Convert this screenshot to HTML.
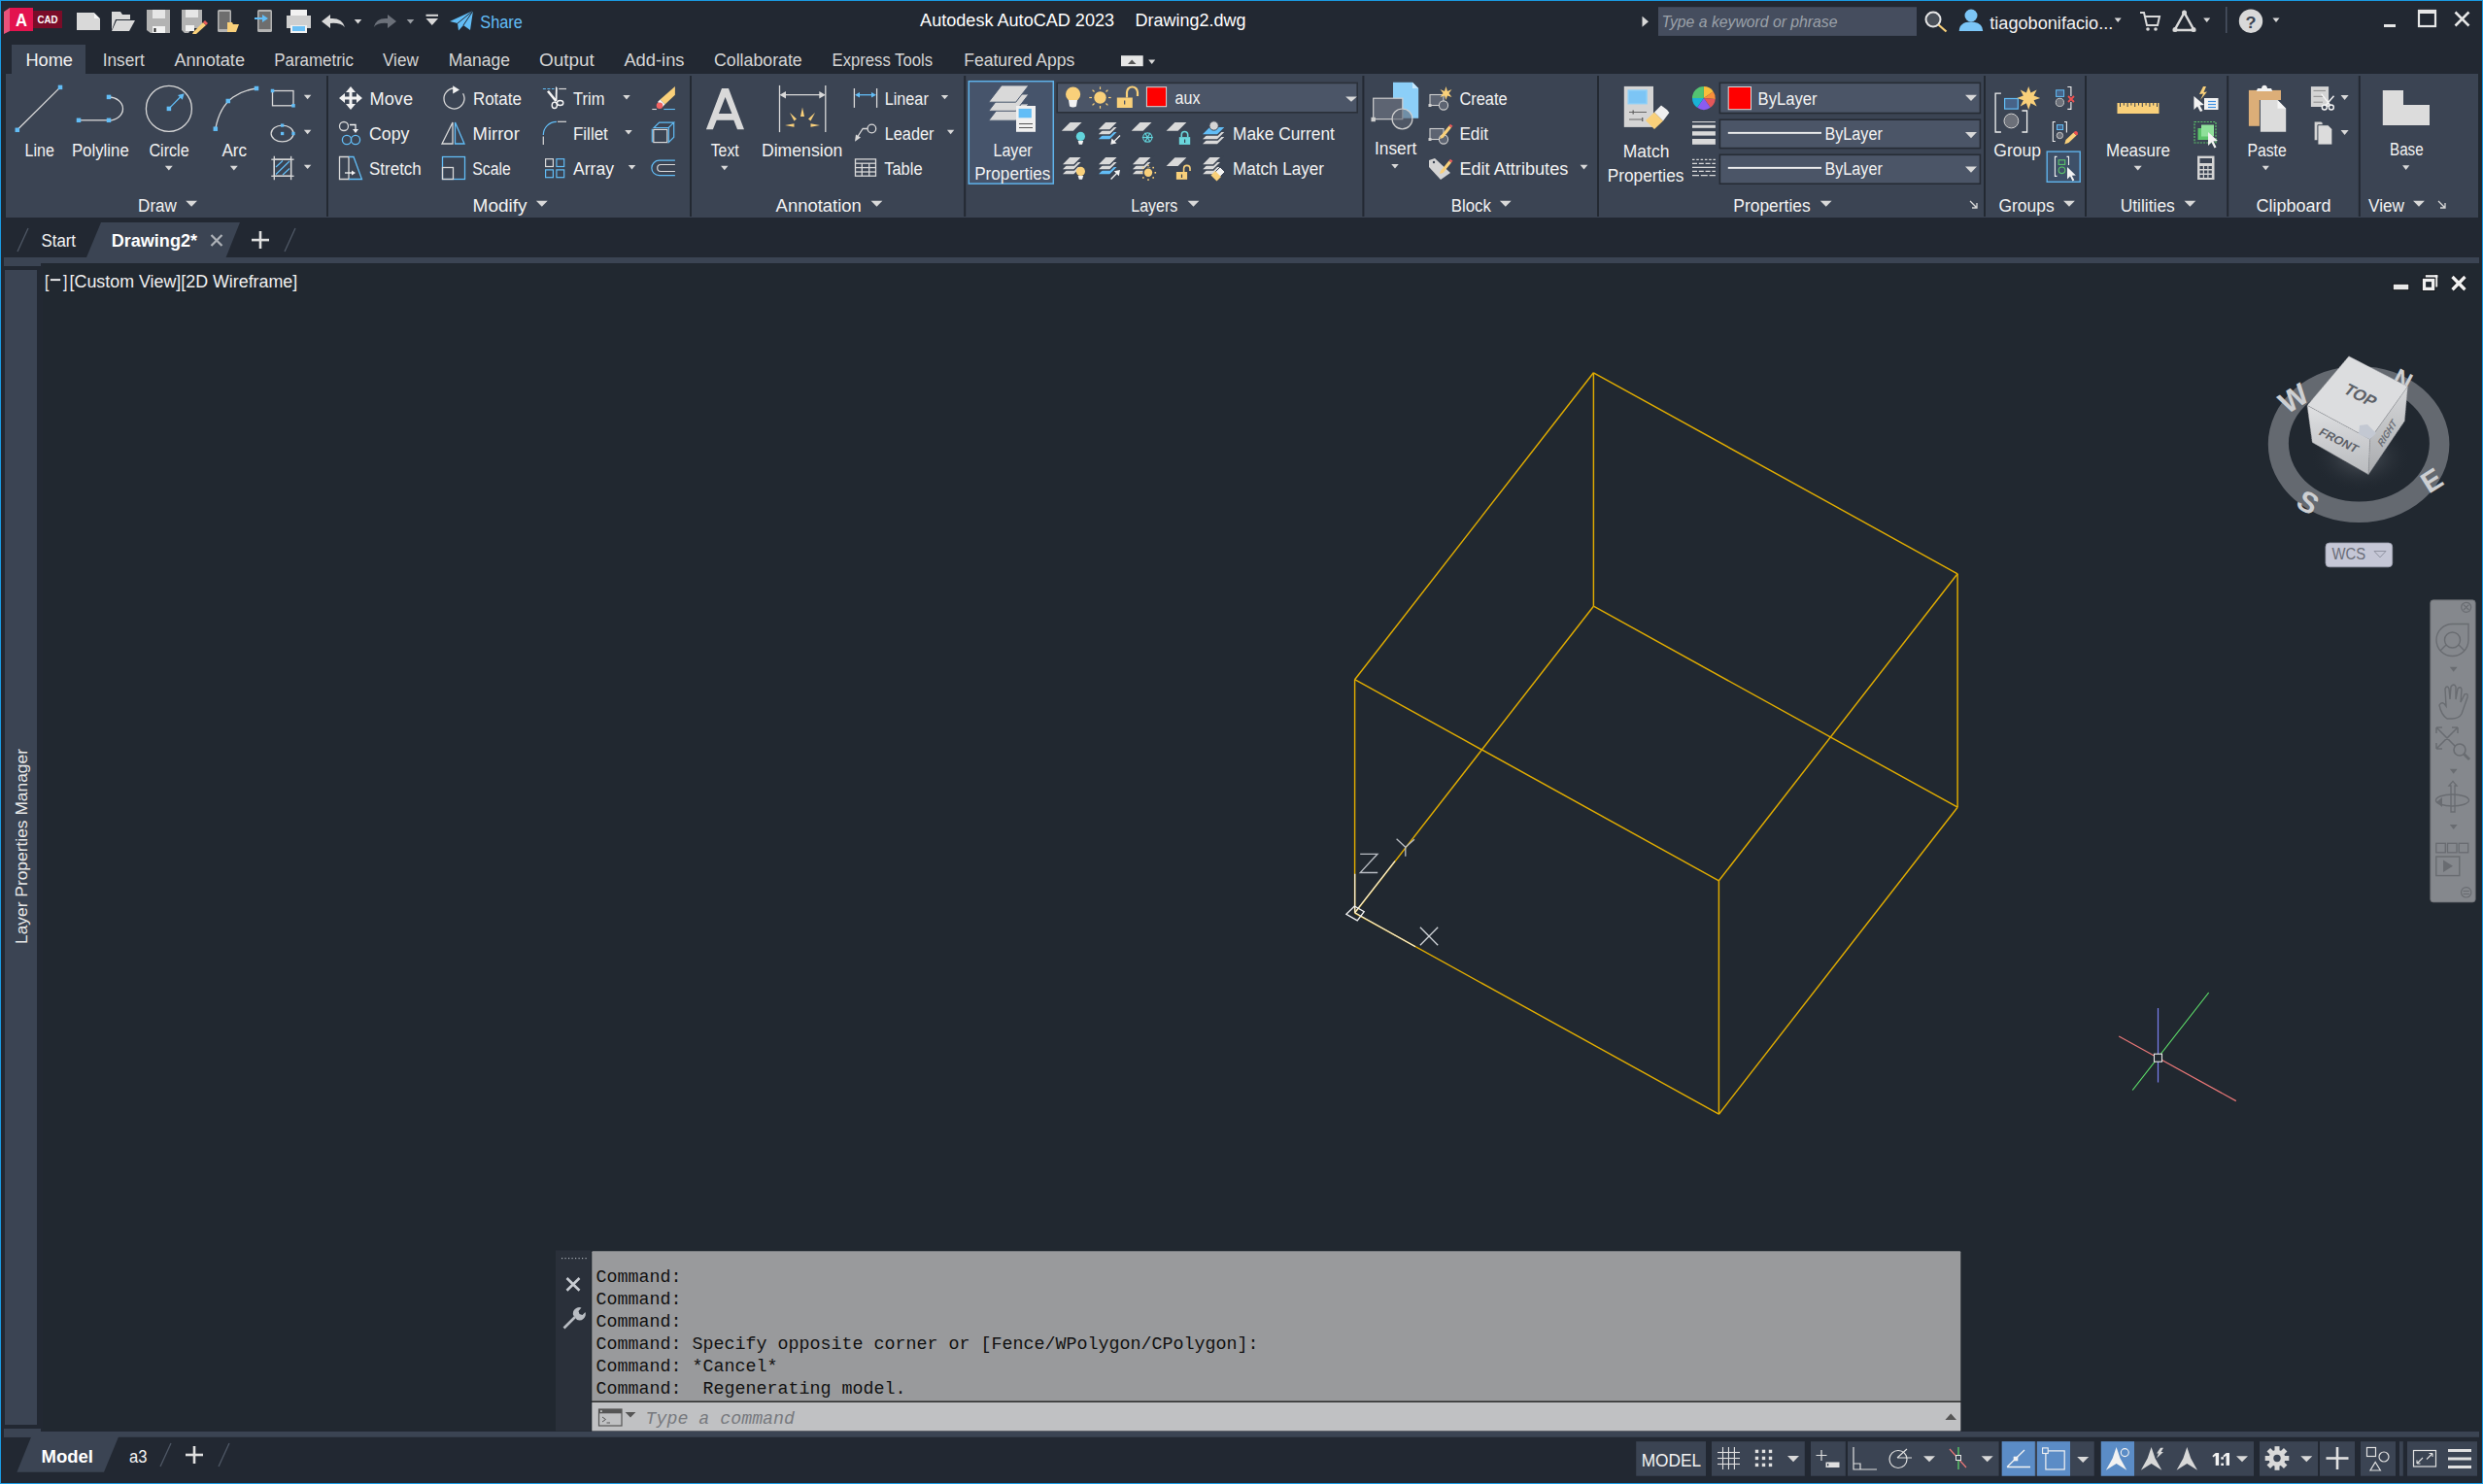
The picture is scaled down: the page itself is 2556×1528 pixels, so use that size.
<!DOCTYPE html>
<html><head><meta charset="utf-8"><title>AutoCAD</title>
<style>
html,body{margin:0;padding:0;width:2556px;height:1528px;overflow:hidden;background:#212830;}
body{font-family:"Liberation Sans",sans-serif;position:relative;}
.r{position:absolute;}
svg{position:absolute;left:0;top:0;}
</style></head><body>
<div class="r" style="left:0;top:0;width:2556px;height:76px;background:#222832"></div>
<div class="r" style="left:0;top:224px;width:2556px;height:47px;background:#222832"></div>
<div class="r" style="left:0;top:1473px;width:2556px;height:55px;background:#222832"></div>
<div class="r" style="left:0;top:271px;width:44px;height:1208px;background:#222832"></div>
<div class="r" style="left:0;top:0;width:2556px;height:1.2px;background:#1a9be3"></div>
<div class="r" style="left:0;top:0;width:1.4px;height:1528px;background:#1a9be3"></div>
<svg width="2556" height="1528" viewBox="0 0 2556 1528">
<path d="M4,12 L10,8 L10,32 L4,35 Z" fill="#e8527a" />
<rect x="10" y="8" width="24" height="24" fill="#e3134e" />
<rect x="34" y="11" width="30" height="18" fill="#7a0c28" />
<text x="16" y="27.2" font-family="Liberation Sans" font-size="19" fill="#fff" font-weight="bold" font-style="normal" textLength="12" lengthAdjust="spacingAndGlyphs" >A</text>
<text x="38.4" y="24.4" font-family="Liberation Sans" font-size="11.5" fill="#fff" font-weight="bold" font-style="normal" textLength="21" lengthAdjust="spacingAndGlyphs" >CAD</text>
<path d="M79,13 L97,13 L103,19 L103,31 L79,31 Z" fill="#d9d9d9" />
<path d="M97,13 L103,19 L97,19 Z" fill="#f5f5f5" />
<path d="M97,13 L103,13 L103,19 Z" fill="#222832" />
<path d="M115,12 L124,12 L126,15 L134,15 L134,20 L119,20 L115,31 Z" fill="#d9d9d9" />
<path d="M120,21 L139,21 L133,32 L115,32 Z" fill="#d9d9d9" />
<path d="M151,10 L175,10 L175,34 L155,34 L151,31 Z" fill="#b3b3b3" />
<rect x="157" y="10" width="13" height="9" fill="#e6e6e6" />
<rect x="157" y="27" width="13" height="7" fill="#f2f2f2" />
<rect x="158.5" y="29" width="2" height="4" fill="#222" />
<path d="M187,10 L208,10 L208,29 L198,29 L194,34 L190,34 L187,31 Z" fill="#b3b3b3" />
<rect x="191" y="10" width="13" height="8" fill="#e6e6e6" />
<rect x="191" y="26" width="9" height="6" fill="#f2f2f2" />
<path d="M199,33 L209,23 L212,26 L202,35 L198,35 Z" fill="#f9d07a" />
<path d="M209,23 L211,21 L214,24 L212,26 Z" fill="#e85a5a" />
<rect x="224" y="10" width="14" height="23" fill="#b3b3b3" rx="1.5"/>
<rect x="225.5" y="12" width="11" height="18" fill="#6e6e6e" />
<path d="M234,23 L239,23 L240,25 L246,25 L243,33 L234,33 Z" fill="#f9d07a" />
<rect x="265" y="10" width="15" height="23" fill="#b3b3b3" rx="1.5"/>
<rect x="266.5" y="12" width="12" height="18" fill="#6e6e6e" />
<path d="M262,18 L270,18 L270,15 L276,19 L270,23 L270,20 L262,20 Z" fill="#62bdf6" />
<rect x="299" y="10" width="17" height="7" fill="#f2f2f2" />
<path d="M295,16 L320,16 L320,29 L295,29 Z" fill="#cfcfcf" />
<rect x="299" y="26" width="17" height="8" fill="#f2f2f2" />
<rect x="301" y="27" width="13" height="5" fill="#6cc0f5" />
<path d="M331,22 L340,15 L340,19 Q352,18 355,28 Q350,23 340,24 L340,29 Z" fill="#d9d9d9" />
<path d="M364.75,20 L372.25,20 L368.5,24.5 Z" fill="#d9d9d9"/>
<path d="M408,22 L399,15 L399,19 Q387,18 384.8,28 Q389,23 399,24 L399,29 Z" fill="#6b7079" />
<path d="M418.75,20 L426.25,20 L422.5,24.5 Z" fill="#9a9ea4"/>
<rect x="438.5" y="14.8" width="12.5" height="2" fill="#d9d9d9" />
<path d="M438.5,19 L451,19 L444.75,26 Z" fill="#d9d9d9" />
<path d="M463,22 L487,11 L484,31 L477,26 L472,31.6 L471,24 Z" fill="#62bdf6" />
<path d="M471,24 L487,11 L477,26" fill="none" stroke="#222832" stroke-width="1" />
<text x="494.3" y="29" font-family="Liberation Sans" font-size="18" fill="#62bdf6" font-weight="normal" font-style="normal" textLength="43.5" lengthAdjust="spacingAndGlyphs" >Share</text>
<text x="947.1" y="27" font-family="Liberation Sans" font-size="18" fill="#ffffff" font-weight="normal" font-style="normal" textLength="200" lengthAdjust="spacingAndGlyphs" >Autodesk AutoCAD 2023</text>
<text x="1168.5" y="27" font-family="Liberation Sans" font-size="18" fill="#ffffff" font-weight="normal" font-style="normal" textLength="114" lengthAdjust="spacingAndGlyphs" >Drawing2.dwg</text>
<path d="M1690.5,16.8 L1697,22.3 L1690.5,27.8 Z" fill="#d9d9d9" />
<rect x="1707" y="7.2" width="266" height="29.7" fill="#454d5e" />
<text x="1710.5" y="28" font-family="Liberation Sans" font-size="17" fill="#9ba1a9" font-weight="normal" font-style="italic" textLength="181" lengthAdjust="spacingAndGlyphs" >Type a keyword or phrase</text>
<circle cx="1990" cy="20" r="7.5" fill="#4a5059" stroke="#e6e6e6" stroke-width="2"/>
<line x1="1995.5" y1="25.5" x2="2003.5" y2="32.5" stroke="#f9d07a" stroke-width="2.2" />
<circle cx="2029" cy="16" r="6.5" fill="#7cc6f7"/>
<path d="M2016.7,32 Q2017,22.5 2029,22.5 Q2041,22.5 2041.2,32 Z" fill="#7cc6f7" />
<text x="2048.3" y="30" font-family="Liberation Sans" font-size="18" fill="#f2f2f2" font-weight="normal" font-style="normal" textLength="127" lengthAdjust="spacingAndGlyphs" >tiagobonifacio...</text>
<path d="M2176.7,18.5 L2183.7,18.5 L2180.2,23.0 Z" fill="#d9d9d9"/>
<path d="M2203,13 L2207,13 L2210,26 L2221,26 L2223,17 L2208,17" fill="none" stroke="#d9d9d9" stroke-width="2" />
<circle cx="2211" cy="30" r="1.8" fill="#d9d9d9"/><circle cx="2219" cy="30" r="1.8" fill="#d9d9d9"/>
<path d="M2248.5,13 L2238.5,31 L2258.5,31 Z" fill="none" stroke="#d9d9d9" stroke-width="2.5" />
<circle cx="2248.5" cy="13" r="2.5" fill="#d9d9d9"/><circle cx="2239" cy="30.5" r="2.5" fill="#d9d9d9"/><circle cx="2258" cy="30.5" r="2.5" fill="#d9d9d9"/>
<path d="M2268.2,18.5 L2275.2,18.5 L2271.7,23.0 Z" fill="#d9d9d9"/>
<rect x="2291" y="7" width="1.5" height="27" fill="#4a5363" />
<circle cx="2317" cy="21.7" r="12.2" fill="#d9d9d9"/>
<text x="2311.5" y="28.5" font-family="Liberation Sans" font-size="17" fill="#3b4453" font-weight="bold" font-style="normal" textLength="11" lengthAdjust="spacingAndGlyphs" >?</text>
<path d="M2339.5,18.5 L2346.5,18.5 L2343,23.0 Z" fill="#d9d9d9"/>
<rect x="2454" y="25" width="12" height="3" fill="#e6e6e6" />
<rect x="2490" y="11" width="17" height="16" fill="none" stroke="#e6e6e6" stroke-width="2.2"/>
<rect x="2489" y="10" width="19" height="4" fill="#e6e6e6" />
<path d="M2527.5,12.5 L2541.5,26.5 M2541.5,12.5 L2527.5,26.5" fill="none" stroke="#e6e6e6" stroke-width="2.6" />
<rect x="12" y="46" width="76" height="30" fill="#3b4453" />
<text x="26.4" y="68" font-family="Liberation Sans" font-size="18" fill="#f2f2f2" font-weight="normal" font-style="normal" textLength="48.6" lengthAdjust="spacingAndGlyphs" >Home</text>
<text x="105.7" y="68" font-family="Liberation Sans" font-size="18" fill="#d6d6d6" font-weight="normal" font-style="normal" textLength="43.1" lengthAdjust="spacingAndGlyphs" >Insert</text>
<text x="179.4" y="68" font-family="Liberation Sans" font-size="18" fill="#d6d6d6" font-weight="normal" font-style="normal" textLength="72.6" lengthAdjust="spacingAndGlyphs" >Annotate</text>
<text x="282.2" y="68" font-family="Liberation Sans" font-size="18" fill="#d6d6d6" font-weight="normal" font-style="normal" textLength="81.8" lengthAdjust="spacingAndGlyphs" >Parametric</text>
<text x="394" y="68" font-family="Liberation Sans" font-size="18" fill="#d6d6d6" font-weight="normal" font-style="normal" textLength="36.8" lengthAdjust="spacingAndGlyphs" >View</text>
<text x="461.7" y="68" font-family="Liberation Sans" font-size="18" fill="#d6d6d6" font-weight="normal" font-style="normal" textLength="63.2" lengthAdjust="spacingAndGlyphs" >Manage</text>
<text x="555" y="68" font-family="Liberation Sans" font-size="18" fill="#d6d6d6" font-weight="normal" font-style="normal" textLength="56.9" lengthAdjust="spacingAndGlyphs" >Output</text>
<text x="642.4" y="68" font-family="Liberation Sans" font-size="18" fill="#d6d6d6" font-weight="normal" font-style="normal" textLength="62.1" lengthAdjust="spacingAndGlyphs" >Add-ins</text>
<text x="735" y="68" font-family="Liberation Sans" font-size="18" fill="#d6d6d6" font-weight="normal" font-style="normal" textLength="90.7" lengthAdjust="spacingAndGlyphs" >Collaborate</text>
<text x="856.6" y="68" font-family="Liberation Sans" font-size="18" fill="#d6d6d6" font-weight="normal" font-style="normal" textLength="103.4" lengthAdjust="spacingAndGlyphs" >Express Tools</text>
<text x="992.2" y="68" font-family="Liberation Sans" font-size="18" fill="#d6d6d6" font-weight="normal" font-style="normal" textLength="114.1" lengthAdjust="spacingAndGlyphs" >Featured Apps</text>
<rect x="1154" y="57.2" width="22.7" height="11" fill="#e6e6e6" />
<path d="M1161,66 L1169.5,66 L1165.2,61.5 Z" fill="#555" />
<path d="M1182.2,61.5 L1189.2,61.5 L1185.7,66.0 Z" fill="#d9d9d9"/>
<rect x="6" y="76" width="2545" height="148" fill="#3b4453" />
<rect x="336" y="78" width="2" height="145" fill="#232932" />
<rect x="710" y="78" width="2" height="145" fill="#232932" />
<rect x="992.2" y="78" width="2" height="145" fill="#232932" />
<rect x="1402.4" y="78" width="2" height="145" fill="#232932" />
<rect x="1644" y="78" width="2" height="145" fill="#232932" />
<rect x="2042" y="78" width="2" height="145" fill="#232932" />
<rect x="2146" y="78" width="2" height="145" fill="#232932" />
<rect x="2292.2" y="78" width="2" height="145" fill="#232932" />
<rect x="2427.8" y="78" width="2" height="145" fill="#232932" />
<text x="142.1" y="217.6" font-family="Liberation Sans" font-size="18" fill="#f2f2f2" font-weight="normal" font-style="normal" textLength="39.7" lengthAdjust="spacingAndGlyphs" >Draw</text>
<path d="M191.2,206.7 L203.0,206.7 L197.1,212.79999999999998 Z" fill="#d9d9d9"/>
<text x="486.6" y="217.6" font-family="Liberation Sans" font-size="18" fill="#f2f2f2" font-weight="normal" font-style="normal" textLength="55.9" lengthAdjust="spacingAndGlyphs" >Modify</text>
<path d="M551.9,206.7 L563.6999999999999,206.7 L557.8,212.79999999999998 Z" fill="#d9d9d9"/>
<text x="798.6" y="217.6" font-family="Liberation Sans" font-size="18" fill="#f2f2f2" font-weight="normal" font-style="normal" textLength="88.2" lengthAdjust="spacingAndGlyphs" >Annotation</text>
<path d="M896.6,206.7 L908.4,206.7 L902.5,212.79999999999998 Z" fill="#d9d9d9"/>
<text x="1164.3" y="217.6" font-family="Liberation Sans" font-size="18" fill="#f2f2f2" font-weight="normal" font-style="normal" textLength="48" lengthAdjust="spacingAndGlyphs" >Layers</text>
<path d="M1222.6,206.7 L1234.4,206.7 L1228.5,212.79999999999998 Z" fill="#d9d9d9"/>
<text x="1493.8" y="217.6" font-family="Liberation Sans" font-size="18" fill="#f2f2f2" font-weight="normal" font-style="normal" textLength="41.1" lengthAdjust="spacingAndGlyphs" >Block</text>
<path d="M1543.8999999999999,206.7 L1555.7,206.7 L1549.8,212.79999999999998 Z" fill="#d9d9d9"/>
<text x="1784.3" y="217.6" font-family="Liberation Sans" font-size="18" fill="#f2f2f2" font-weight="normal" font-style="normal" textLength="79.4" lengthAdjust="spacingAndGlyphs" >Properties</text>
<path d="M1873.8,206.7 L1885.6000000000001,206.7 L1879.7,212.79999999999998 Z" fill="#d9d9d9"/>
<text x="2057.5" y="217.6" font-family="Liberation Sans" font-size="18" fill="#f2f2f2" font-weight="normal" font-style="normal" textLength="57.2" lengthAdjust="spacingAndGlyphs" >Groups</text>
<path d="M2124.1,206.7 L2135.9,206.7 L2130,212.79999999999998 Z" fill="#d9d9d9"/>
<text x="2182.7" y="217.6" font-family="Liberation Sans" font-size="18" fill="#f2f2f2" font-weight="normal" font-style="normal" textLength="56.1" lengthAdjust="spacingAndGlyphs" >Utilities</text>
<path d="M2248.5,206.7 L2260.3,206.7 L2254.4,212.79999999999998 Z" fill="#d9d9d9"/>
<text x="2322.4" y="217.6" font-family="Liberation Sans" font-size="18" fill="#f2f2f2" font-weight="normal" font-style="normal" textLength="77.1" lengthAdjust="spacingAndGlyphs" >Clipboard</text>
<text x="2438" y="217.6" font-family="Liberation Sans" font-size="18" fill="#f2f2f2" font-weight="normal" font-style="normal" textLength="37" lengthAdjust="spacingAndGlyphs" >View</text>
<path d="M2484.1,206.7 L2495.9,206.7 L2490,212.79999999999998 Z" fill="#d9d9d9"/>
<path d="M2028,207 L2035,214 M2035,209 L2035,214 L2030,214" fill="none" stroke="#d9d9d9" stroke-width="1.3" />
<path d="M2510,207 L2517,214 M2517,209 L2517,214 L2512,214" fill="none" stroke="#d9d9d9" stroke-width="1.3" />
<line x1="17.8" y1="133.8" x2="62" y2="89.9" stroke="#d9d9d9" stroke-width="1.3" />
<rect x="15.55" y="131.55" width="4.5" height="4.5" fill="#62bdf6" />
<rect x="59.75" y="87.65" width="4.5" height="4.5" fill="#62bdf6" />
<line x1="81" y1="123.8" x2="112" y2="123.8" stroke="#d9d9d9" stroke-width="1.3" />
<path d="M112,100 A14.5,12 0 0 1 112,124" fill="none" stroke="#d9d9d9" stroke-width="1.3" />
<rect x="78.75" y="121.55" width="4.5" height="4.5" fill="#62bdf6" />
<rect x="109.75" y="121.55" width="4.5" height="4.5" fill="#62bdf6" />
<rect x="109.75" y="97.65" width="4.5" height="4.5" fill="#62bdf6" />
<circle cx="173.9" cy="111.9" r="23.5" fill="none" stroke="#d9d9d9" stroke-width="1.3"/>
<line x1="173.9" y1="111.9" x2="187" y2="98.5" stroke="#62bdf6" stroke-width="1.3" />
<path d="M189.6,96.2 L183,98 L187.8,102.8 Z" fill="#62bdf6" />
<rect x="171.65" y="109.65" width="4.5" height="4.5" fill="#62bdf6" />
<path d="M221.8,132.7 Q226,110 240,100 Q250,93 264,91" fill="none" stroke="#d9d9d9" stroke-width="1.3" />
<rect x="219.55" y="130.45" width="4.5" height="4.5" fill="#62bdf6" />
<rect x="232.55" y="101.75" width="4.5" height="4.5" fill="#62bdf6" />
<rect x="261.75" y="88.75" width="4.5" height="4.5" fill="#62bdf6" />
<text x="25.6" y="161.2" font-family="Liberation Sans" font-size="18" fill="#f2f2f2" font-weight="normal" font-style="normal" textLength="30.3" lengthAdjust="spacingAndGlyphs" >Line</text>
<text x="73.9" y="161.2" font-family="Liberation Sans" font-size="18" fill="#f2f2f2" font-weight="normal" font-style="normal" textLength="58.9" lengthAdjust="spacingAndGlyphs" >Polyline</text>
<text x="153.4" y="161.2" font-family="Liberation Sans" font-size="18" fill="#f2f2f2" font-weight="normal" font-style="normal" textLength="41.3" lengthAdjust="spacingAndGlyphs" >Circle</text>
<text x="228.4" y="161.2" font-family="Liberation Sans" font-size="18" fill="#f2f2f2" font-weight="normal" font-style="normal" textLength="25.6" lengthAdjust="spacingAndGlyphs" >Arc</text>
<path d="M169.85000000000002,170.8 L177.75,170.8 L173.8,175.60000000000002 Z" fill="#d9d9d9"/>
<path d="M236.85000000000002,170.8 L244.75,170.8 L240.8,175.60000000000002 Z" fill="#d9d9d9"/>
<rect x="280.5" y="93.5" width="21.5" height="15.3" fill="none" stroke="#d9d9d9" stroke-width="1.3"/>
<rect x="278.75" y="91.75" width="3.5" height="3.5" fill="#62bdf6" />
<rect x="300.25" y="107.05" width="3.5" height="3.5" fill="#62bdf6" />
<path d="M312.85,97.8 L320.35,97.8 L316.6,102.2 Z" fill="#d9d9d9"/>
<ellipse cx="290.6" cy="137.5" rx="11.5" ry="8.4" fill="none" stroke="#d9d9d9" stroke-width="1.3"/>
<rect x="288.95000000000005" y="127.44999999999999" width="3.3" height="3.3" fill="#62bdf6" />
<rect x="288.95000000000005" y="135.85" width="3.3" height="3.3" fill="#62bdf6" />
<rect x="300.35" y="135.85" width="3.3" height="3.3" fill="#62bdf6" />
<path d="M312.85,133.8 L320.35,133.8 L316.6,138.20000000000002 Z" fill="#d9d9d9"/>
<rect x="282.3" y="164.2" width="17.3" height="17.1" fill="none" stroke="#d9d9d9" stroke-width="1.3"/>
<line x1="279.3" y1="164.2" x2="302.6" y2="164.2" stroke="#d9d9d9" stroke-width="1.3" />
<line x1="279.3" y1="181.3" x2="302.6" y2="181.3" stroke="#d9d9d9" stroke-width="1.3" />
<line x1="282.3" y1="160.8" x2="282.3" y2="185.2" stroke="#d9d9d9" stroke-width="1.3" />
<line x1="299.6" y1="160.8" x2="299.6" y2="185.2" stroke="#d9d9d9" stroke-width="1.3" />
<path d="M284,172 L291,165.5 M284,179.5 L298,166 M291,180 L298,173.5" fill="none" stroke="#62bdf6" stroke-width="1.2" />
<path d="M312.85,169.7 L320.35,169.7 L316.6,174.1 Z" fill="#d9d9d9"/>
<path d="M361,89 L366,95 L362.5,95 L362.5,99.5 L367,99.5 L367,96 L373,101 L367,106 L367,102.5 L362.5,102.5 L362.5,107 L366,107 L361,113 L356,107 L359.5,107 L359.5,102.5 L355,102.5 L355,106 L349,101 L355,96 L355,99.5 L359.5,99.5 L359.5,95 L356,95 Z" fill="#f2f2f2" />
<text x="380.5" y="108.2" font-family="Liberation Sans" font-size="18" fill="#f2f2f2" font-weight="normal" font-style="normal" textLength="44.5" lengthAdjust="spacingAndGlyphs" >Move</text>
<circle cx="354" cy="130" r="4.5" fill="none" stroke="#d9d9d9" stroke-width="1.3"/>
<path d="M360,128.5 L366,128.5 L366,134" fill="none" stroke="#f2f2f2" stroke-width="1.3" />
<path d="M363,133 L369,133 L366,137 Z" fill="#f2f2f2" />
<circle cx="357" cy="144" r="4.6" fill="none" stroke="#62bdf6" stroke-width="1.3"/><circle cx="366" cy="144" r="4.6" fill="none" stroke="#62bdf6" stroke-width="1.3"/>
<text x="380" y="144.0" font-family="Liberation Sans" font-size="18" fill="#f2f2f2" font-weight="normal" font-style="normal" textLength="41.4" lengthAdjust="spacingAndGlyphs" >Copy</text>
<path d="M349.5,161.5 L359,161.5 L359,184.5 L349.5,184.5 Z" fill="none" stroke="#d9d9d9" stroke-width="1.3" />
<path d="M359,161.5 L364,161.5 L372.5,184.5 L359,184.5" fill="none" stroke="#62bdf6" stroke-width="1.3" />
<path d="M355,178 L363,178" fill="none" stroke="#f2f2f2" stroke-width="1.3" />
<path d="M362,175.5 L366,178 L362,180.5 Z" fill="#f2f2f2" />
<text x="380" y="179.9" font-family="Liberation Sans" font-size="18" fill="#f2f2f2" font-weight="normal" font-style="normal" textLength="53.8" lengthAdjust="spacingAndGlyphs" >Stretch</text>
<path d="M476.6,96.3 A10.5,10.5 0 1 1 467,91" fill="none" stroke="#d9d9d9" stroke-width="1.3" />
<path d="M466.2,88.3 L473,92.4 L466.2,96.4 Z" fill="#f2f2f2" />
<text x="486.9" y="108.2" font-family="Liberation Sans" font-size="18" fill="#f2f2f2" font-weight="normal" font-style="normal" textLength="50" lengthAdjust="spacingAndGlyphs" >Rotate</text>
<path d="M466,126 L466,148 L455,148 Z" fill="none" stroke="#d9d9d9" stroke-width="1.3" />
<path d="M468.5,126 L468.5,148 L478,148 Z" fill="none" stroke="#62bdf6" stroke-width="1.3" />
<text x="486.6" y="144.0" font-family="Liberation Sans" font-size="18" fill="#f2f2f2" font-weight="normal" font-style="normal" textLength="48.2" lengthAdjust="spacingAndGlyphs" >Mirror</text>
<rect x="455.5" y="161.5" width="23" height="23" fill="none" stroke="#62bdf6" stroke-width="1.3"/>
<rect x="455.5" y="172.5" width="11" height="12" fill="none" stroke="#d9d9d9" stroke-width="1.3"/>
<text x="486.3" y="179.9" font-family="Liberation Sans" font-size="18" fill="#f2f2f2" font-weight="normal" font-style="normal" textLength="39.5" lengthAdjust="spacingAndGlyphs" >Scale</text>
<line x1="558.9" y1="91.5" x2="570.5" y2="91.5" stroke="#62bdf6" stroke-width="1.2" stroke-dasharray="3 1.5"/>
<line x1="575.2" y1="91.5" x2="583" y2="91.5" stroke="#d9d9d9" stroke-width="1.2" />
<path d="M563,94.5 L565,93 L573.5,103.5 L571.5,105 Z" fill="#f5f5f5" />
<path d="M572,89 L573.7,90.5 L573.5,103 L571.7,103 Z" fill="#f5f5f5" />
<ellipse cx="570.8" cy="108.3" rx="2.6" ry="3.2" fill="none" stroke="#f5f5f5" stroke-width="1.4"/><ellipse cx="576.6" cy="106" rx="3.2" ry="2.5" fill="none" stroke="#f5f5f5" stroke-width="1.4"/>
<text x="590" y="108.2" font-family="Liberation Sans" font-size="18" fill="#f2f2f2" font-weight="normal" font-style="normal" textLength="32.4" lengthAdjust="spacingAndGlyphs" >Trim</text>
<path d="M641.25,98 L648.75,98 L645,102.4 Z" fill="#d9d9d9"/>
<path d="M559.3,139 A13.6,13.6 0 0 1 572.9,125.3" fill="none" stroke="#62bdf6" stroke-width="1.2" />
<line x1="559.3" y1="140.5" x2="559.3" y2="149" stroke="#d9d9d9" stroke-width="1.2" />
<line x1="574" y1="125.3" x2="583" y2="125.3" stroke="#d9d9d9" stroke-width="1.2" />
<text x="590" y="144.0" font-family="Liberation Sans" font-size="18" fill="#f2f2f2" font-weight="normal" font-style="normal" textLength="35.8" lengthAdjust="spacingAndGlyphs" >Fillet</text>
<path d="M643.25,134 L650.75,134 L647,138.4 Z" fill="#d9d9d9"/>
<rect x="561.6" y="163.7" width="7.8" height="7.8" fill="none" stroke="#d9d9d9" stroke-width="1.2"/>
<rect x="572.9" y="163.7" width="7.8" height="7.8" fill="none" stroke="#62bdf6" stroke-width="1.2"/>
<rect x="561.6" y="174.9" width="7.8" height="7.8" fill="none" stroke="#62bdf6" stroke-width="1.2"/>
<rect x="572.9" y="174.9" width="7.8" height="7.8" fill="none" stroke="#62bdf6" stroke-width="1.2"/>
<text x="590" y="179.9" font-family="Liberation Sans" font-size="18" fill="#f2f2f2" font-weight="normal" font-style="normal" textLength="42" lengthAdjust="spacingAndGlyphs" >Array</text>
<path d="M646.75,170 L654.25,170 L650.5,174.4 Z" fill="#d9d9d9"/>
<path d="M694.9,88.9 L694.9,97.8 L684.5,107.5 L679.5,102.5 Z" fill="#f9d07a" />
<path d="M679.5,102.5 L684.5,107.5 L682,110 L677,105 Z" fill="#f5f5f5" />
<circle cx="679" cy="108.7" r="3.3" fill="#ef6262"/>
<line x1="671.3" y1="112.5" x2="675.9" y2="112.5" stroke="#d9d9d9" stroke-width="1.1" />
<line x1="683.3" y1="112.5" x2="694.9" y2="112.5" stroke="#62bdf6" stroke-width="1.1" />
<rect x="672.8" y="133.4" width="14" height="13.2" fill="none" stroke="#d9d9d9" stroke-width="1.2"/>
<path d="M671.3,132.7 L671.3,146.6 M673.2,131.5 L678.6,126.1 L693.7,126.1 L688.3,131.5 Z M693.7,126.1 L693.7,141.2 L688.3,146.6 L688.3,131.5" fill="none" stroke="#62bdf6" stroke-width="1.2" />
<path d="M694.9,165.2 L678.6,165.2 A7.75,7.75 0 0 0 678.6,180.7 L694.9,180.7" fill="none" stroke="#62bdf6" stroke-width="1.2" />
<path d="M694.9,169.5 L680.2,169.5 A3.5,3.5 0 0 0 680.2,176.5 L694.9,176.5" fill="none" stroke="#d9d9d9" stroke-width="1.2" />
<path d="M726.9,133.3 L743,91 L750,91 L766,133.3 L759,133.3 L755.3,123.7 L737.7,123.7 L733.9,133.3 Z M739.9,116.9 L753.4,116.9 L746.6,100 Z" fill="#d9d9d9" fill-rule="evenodd"/>
<text x="731.7" y="161.2" font-family="Liberation Sans" font-size="18" fill="#f2f2f2" font-weight="normal" font-style="normal" textLength="29" lengthAdjust="spacingAndGlyphs" >Text</text>
<path d="M742.05,170.7 L749.55,170.7 L745.8,175.2 Z" fill="#d9d9d9"/>
<line x1="802.5" y1="87.9" x2="802.5" y2="136.1" stroke="#d9d9d9" stroke-width="1.3" />
<line x1="849.8" y1="87.9" x2="849.8" y2="136.1" stroke="#d9d9d9" stroke-width="1.3" />
<line x1="806" y1="97.7" x2="846" y2="97.7" stroke="#d9d9d9" stroke-width="1.3" />
<path d="M802.5,97.7 L809,94 L809,101.4 Z M849.8,97.7 L843.3,94 L843.3,101.4 Z" fill="#d9d9d9" />
<path d="M826,110.5 L828,120 L824,120 Z" fill="#f9d07a" />
<path d="M813,116 L820,122.5 L817.5,124.5 Z" fill="#f9d07a" />
<path d="M839,116 L832,122.5 L834.5,124.5 Z" fill="#f9d07a" />
<path d="M808,129 L817.5,127.2 L817.5,130.8 Z" fill="#f9d07a" />
<path d="M844,129 L834.5,127.2 L834.5,130.8 Z" fill="#f9d07a" />
<text x="783.9" y="161.2" font-family="Liberation Sans" font-size="18" fill="#f2f2f2" font-weight="normal" font-style="normal" textLength="83.4" lengthAdjust="spacingAndGlyphs" >Dimension</text>
<line x1="879.4" y1="91" x2="879.4" y2="110.9" stroke="#d9d9d9" stroke-width="1.3" />
<line x1="902.6" y1="91" x2="902.6" y2="110.9" stroke="#d9d9d9" stroke-width="1.3" />
<line x1="882" y1="97.7" x2="900" y2="97.7" stroke="#62bdf6" stroke-width="1.3" />
<path d="M880,97.7 L885,95 L885,100.4 Z M902,97.7 L897,95 L897,100.4 Z" fill="#62bdf6" />
<text x="910.7" y="108.2" font-family="Liberation Sans" font-size="18" fill="#f2f2f2" font-weight="normal" font-style="normal" textLength="45.1" lengthAdjust="spacingAndGlyphs" >Linear</text>
<path d="M968.85,98 L976.15,98 L972.5,102.2 Z" fill="#d9d9d9"/>
<circle cx="897.4" cy="132.5" r="4.3" fill="none" stroke="#d9d9d9" stroke-width="1.3"/>
<path d="M893,132.5 L888.2,132.5 L882,142" fill="none" stroke="#d9d9d9" stroke-width="1.3" />
<path d="M880,145.7 L881,138.5 L886,141.5 Z" fill="#d9d9d9" />
<text x="910.7" y="144.0" font-family="Liberation Sans" font-size="18" fill="#f2f2f2" font-weight="normal" font-style="normal" textLength="50.8" lengthAdjust="spacingAndGlyphs" >Leader</text>
<path d="M974.95,133.8 L982.25,133.8 L978.6,138.3 Z" fill="#d9d9d9"/>
<rect x="880.5" y="163.9" width="21" height="17.3" fill="none" stroke="#d9d9d9" stroke-width="1.3"/>
<line x1="880.5" y1="168.2" x2="901.5" y2="168.2" stroke="#d9d9d9" stroke-width="1.3" />
<line x1="880.5" y1="172.6" x2="901.5" y2="172.6" stroke="#d9d9d9" stroke-width="1.3" />
<line x1="880.5" y1="177" x2="901.5" y2="177" stroke="#d9d9d9" stroke-width="1.3" />
<line x1="887.3" y1="168.2" x2="887.3" y2="181.2" stroke="#d9d9d9" stroke-width="1.3" />
<line x1="894.7" y1="168.2" x2="894.7" y2="181.2" stroke="#d9d9d9" stroke-width="1.3" />
<text x="910.2" y="179.9" font-family="Liberation Sans" font-size="18" fill="#f2f2f2" font-weight="normal" font-style="normal" textLength="39.4" lengthAdjust="spacingAndGlyphs" >Table</text>
<rect x="997.3" y="83.7" width="87" height="105.4" fill="#46546b" stroke="#5fb2ea" stroke-width="1.5"/>
<path d="M1017.7,124.2 L1031,106.9 L1059,106.9 L1045.7,124.2 Z" fill="#d9d9d9" stroke="#46546b" stroke-width="1"/>
<path d="M1017.7,114.3 L1031,97 L1059,97 L1045.7,114.3 Z" fill="#d9d9d9" stroke="#46546b" stroke-width="1"/>
<path d="M1017.7,105.2 L1031,87.9 L1059,87.9 L1045.7,105.2 Z" fill="#d9d9d9" stroke="#46546b" stroke-width="1"/>
<rect x="1046" y="109" width="20" height="26.8" fill="#f0f0f0" />
<rect x="1048.6" y="111.9" width="13.2" height="9.4" fill="#62bdf6" />
<line x1="1049" y1="127.5" x2="1063" y2="127.5" stroke="#555" stroke-width="1" />
<line x1="1049" y1="131.5" x2="1063" y2="131.5" stroke="#555" stroke-width="1" />
<text x="1022.5" y="160.6" font-family="Liberation Sans" font-size="18" fill="#f2f2f2" font-weight="normal" font-style="normal" textLength="40.2" lengthAdjust="spacingAndGlyphs" >Layer</text>
<text x="1003.2" y="185.29999999999998" font-family="Liberation Sans" font-size="18" fill="#f2f2f2" font-weight="normal" font-style="normal" textLength="78.1" lengthAdjust="spacingAndGlyphs" >Properties</text>
<rect x="1088.2" y="85.4" width="309" height="30.4" fill="#4b5567" stroke="#2a3039" stroke-width="1.6"/>
<circle cx="1104.6" cy="97" r="7.6" fill="#f9d07a"/>
<path d="M1100,103 L1109,103 L1108,109.5 Q1104.6,111.5 1101,109.5 Z" fill="#f2f2f2" />
<circle cx="1132.5" cy="100.5" r="6.2" fill="#f9d07a"/>
<line x1="1141.00" y1="100.50" x2="1143.70" y2="100.50" stroke="#f9d07a" stroke-width="1.2"/>
<line x1="1138.51" y1="106.51" x2="1140.42" y2="108.42" stroke="#f9d07a" stroke-width="1.2"/>
<line x1="1132.50" y1="109.00" x2="1132.50" y2="111.70" stroke="#f9d07a" stroke-width="1.2"/>
<line x1="1126.49" y1="106.51" x2="1124.58" y2="108.42" stroke="#f9d07a" stroke-width="1.2"/>
<line x1="1124.00" y1="100.50" x2="1121.30" y2="100.50" stroke="#f9d07a" stroke-width="1.2"/>
<line x1="1126.49" y1="94.49" x2="1124.58" y2="92.58" stroke="#f9d07a" stroke-width="1.2"/>
<line x1="1132.50" y1="92.00" x2="1132.50" y2="89.30" stroke="#f9d07a" stroke-width="1.2"/>
<line x1="1138.51" y1="94.49" x2="1140.42" y2="92.58" stroke="#f9d07a" stroke-width="1.2"/>
<rect x="1149.8" y="100.5" width="16" height="10.5" fill="#f9d07a" />
<path d="M1160,100.5 L1160,95 A5.5,5.5 0 0 1 1171,95 L1171,99" fill="none" stroke="#f9d07a" stroke-width="2.2" />
<rect x="1157" y="103.5" width="1.3" height="4" fill="#4b5567" />
<rect x="1180.4" y="89.7" width="20.2" height="20" fill="#ff0000" stroke="#d8d8d8" stroke-width="1"/>
<text x="1209.6" y="106.9" font-family="Liberation Sans" font-size="18" fill="#f2f2f2" font-weight="normal" font-style="normal" textLength="25.9" lengthAdjust="spacingAndGlyphs" >aux</text>
<path d="M1385.1,99.5 L1396.9,99.5 L1391,104.7 Z" fill="#d9d9d9"/>
<path d="M1092.8,134.8 L1101.6,126.00000000000001 L1113.6,126.00000000000001 L1104.8,134.8 Z" fill="#d9d9d9" />
<circle cx="1112.4" cy="140.4" r="4.6" fill="#62d4dc"/>
<path d="M1109.6000000000001,145.0 L1115.2,145.0 L1114.0,148.8 L1110.8000000000002,148.8 Z" fill="#f2f2f2" />
<path d="M1129.0,144 L1137.8,135.2 L1151.3999999999999,135.2 L1142.6,144 Z" fill="#62bdf6" stroke="#3b4453" stroke-width="1.5" stroke-linejoin="miter"/>
<path d="M1129.0,139 L1137.8,130.2 L1151.3999999999999,130.2 L1142.6,139 Z" fill="#d9d9d9" stroke="#3b4453" stroke-width="1.5" stroke-linejoin="miter"/>
<path d="M1129.0,134 L1137.8,125.2 L1151.3999999999999,125.2 L1142.6,134 Z" fill="#d9d9d9" stroke="#3b4453" stroke-width="1.5" stroke-linejoin="miter"/>
<path d="M1153,139.5 L1146,146.5" fill="none" stroke="#f2f2f2" stroke-width="1.3" />
<path d="M1143.3,148.8 L1144.5,142.5 L1149.5,147.5 Z" fill="#f2f2f2" />
<path d="M1164.7,134.8 L1173.5,126.00000000000001 L1185.5,126.00000000000001 L1176.7,134.8 Z" fill="#d9d9d9" />
<line x1="1186.80" y1="141.50" x2="1175.80" y2="141.50" stroke="#62d4dc" stroke-width="1.2"/>
<line x1="1184.05" y1="146.26" x2="1178.55" y2="136.74" stroke="#62d4dc" stroke-width="1.2"/>
<line x1="1178.55" y1="146.26" x2="1184.05" y2="136.74" stroke="#62d4dc" stroke-width="1.2"/>
<circle cx="1181.3" cy="141.5" r="4.6" fill="none" stroke="#62d4dc" stroke-width="1.1"/>
<path d="M1200.6,134.8 L1209.3999999999999,126.00000000000001 L1221.3999999999999,126.00000000000001 L1212.6,134.8 Z" fill="#d9d9d9" />
<rect x="1213.8" y="141.1" width="11.4" height="7.8" fill="#6ad6dc" />
<path d="M1216.3,141.1 L1216.3,138.7 A3.2,3.2 0 0 1 1222.7,138.7 L1222.7,141.1" fill="none" stroke="#6ad6dc" stroke-width="1.6" />
<rect x="1219" y="143.5" width="1.2" height="3.5" fill="#3b4453" />
<path d="M1236.2,149 L1245.0,140.2 L1262.1,140.2 L1253.3,149 Z" fill="#d9d9d9" stroke="#3b4453" stroke-width="1.5" stroke-linejoin="miter"/>
<path d="M1236.2,144 L1245.0,135.2 L1262.1,135.2 L1253.3,144 Z" fill="#d9d9d9" stroke="#3b4453" stroke-width="1.5" stroke-linejoin="miter"/>
<path d="M1236.2,139 L1245.0,130.2 L1262.1,130.2 L1253.3,139 Z" fill="#62bdf6" stroke="#3b4453" stroke-width="1.5" stroke-linejoin="miter"/>
<circle cx="1249.6" cy="129.5" r="4.7" fill="#d4d4d4" stroke="#3b4453" stroke-width="1"/>
<text x="1269" y="144.0" font-family="Liberation Sans" font-size="18" fill="#f2f2f2" font-weight="normal" font-style="normal" textLength="104.9" lengthAdjust="spacingAndGlyphs" >Make Current</text>
<path d="M1092.0,180.1 L1100.8,171.29999999999998 L1114.3999999999999,171.29999999999998 L1105.6,180.1 Z" fill="#d9d9d9" stroke="#3b4453" stroke-width="1.5" stroke-linejoin="miter"/>
<path d="M1092.0,175.1 L1100.8,166.29999999999998 L1114.3999999999999,166.29999999999998 L1105.6,175.1 Z" fill="#d9d9d9" stroke="#3b4453" stroke-width="1.5" stroke-linejoin="miter"/>
<path d="M1092.0,170.1 L1100.8,161.29999999999998 L1114.3999999999999,161.29999999999998 L1105.6,170.1 Z" fill="#d9d9d9" stroke="#3b4453" stroke-width="1.5" stroke-linejoin="miter"/>
<circle cx="1112.4" cy="176.4" r="4.6" fill="#f9d07a"/>
<path d="M1109.6000000000001,181.0 L1115.2,181.0 L1114.0,184.8 L1110.8000000000002,184.8 Z" fill="#f2f2f2" />
<path d="M1129.0,180.1 L1137.8,171.29999999999998 L1151.3999999999999,171.29999999999998 L1142.6,180.1 Z" fill="#62bdf6" stroke="#3b4453" stroke-width="1.5" stroke-linejoin="miter"/>
<path d="M1129.0,175.1 L1137.8,166.29999999999998 L1151.3999999999999,166.29999999999998 L1142.6,175.1 Z" fill="#d9d9d9" stroke="#3b4453" stroke-width="1.5" stroke-linejoin="miter"/>
<path d="M1129.0,170.1 L1137.8,161.29999999999998 L1151.3999999999999,161.29999999999998 L1142.6,170.1 Z" fill="#d9d9d9" stroke="#3b4453" stroke-width="1.5" stroke-linejoin="miter"/>
<path d="M1143.6,184.5 L1150.5,177.5" fill="none" stroke="#f2f2f2" stroke-width="1.3" />
<path d="M1153,175 L1151.8,181.3 L1146.8,176.3 Z" fill="#f2f2f2" />
<path d="M1163.9,180.1 L1172.7,171.29999999999998 L1186.3,171.29999999999998 L1177.5,180.1 Z" fill="#d9d9d9" stroke="#3b4453" stroke-width="1.5" stroke-linejoin="miter"/>
<path d="M1163.9,175.1 L1172.7,166.29999999999998 L1186.3,166.29999999999998 L1177.5,175.1 Z" fill="#d9d9d9" stroke="#3b4453" stroke-width="1.5" stroke-linejoin="miter"/>
<path d="M1163.9,170.1 L1172.7,161.29999999999998 L1186.3,161.29999999999998 L1177.5,170.1 Z" fill="#d9d9d9" stroke="#3b4453" stroke-width="1.5" stroke-linejoin="miter"/>
<circle cx="1182" cy="177.8" r="5.6" fill="#3b4453"/><circle cx="1182" cy="177.8" r="4.2" fill="#f9d07a"/>
<rect x="1188.5" y="177.0" width="1.6" height="1.6" fill="#f9d07a" />
<rect x="1186.36" y="182.16" width="1.6" height="1.6" fill="#f9d07a" />
<rect x="1181.2" y="184.3" width="1.6" height="1.6" fill="#f9d07a" />
<rect x="1176.04" y="182.16" width="1.6" height="1.6" fill="#f9d07a" />
<rect x="1173.9" y="177.0" width="1.6" height="1.6" fill="#f9d07a" />
<rect x="1176.04" y="171.84" width="1.6" height="1.6" fill="#f9d07a" />
<rect x="1181.2" y="169.7" width="1.6" height="1.6" fill="#f9d07a" />
<rect x="1186.36" y="171.84" width="1.6" height="1.6" fill="#f9d07a" />
<path d="M1200.6,171.1 L1209.3999999999999,162.29999999999998 L1221.3999999999999,162.29999999999998 L1212.6,171.1 Z" fill="#d9d9d9" />
<rect x="1210.9" y="177" width="11.2" height="7.8" fill="#f9d07a" />
<path d="M1218.6,177 L1218.6,173.6 A3.2,3.2 0 0 1 1225,173.6 L1225,176" fill="none" stroke="#f9d07a" stroke-width="1.6" />
<rect x="1215.9" y="179.5" width="1.2" height="3.5" fill="#3b4453" />
<path d="M1236.2,180.1 L1245.0,171.29999999999998 L1257.8,171.29999999999998 L1249.0,180.1 Z" fill="#d9d9d9" stroke="#3b4453" stroke-width="1.5" stroke-linejoin="miter"/>
<path d="M1236.2,175.1 L1245.0,166.29999999999998 L1257.8,166.29999999999998 L1249.0,175.1 Z" fill="#d9d9d9" stroke="#3b4453" stroke-width="1.5" stroke-linejoin="miter"/>
<path d="M1236.2,170.1 L1245.0,161.29999999999998 L1257.8,161.29999999999998 L1249.0,170.1 Z" fill="#d9d9d9" stroke="#3b4453" stroke-width="1.5" stroke-linejoin="miter"/>
<path d="M1250,178 L1256,172 L1261,177 L1255,183 Z" fill="#f2f2f2" stroke="#3b4453" stroke-width="1"/>
<path d="M1246.5,180.5 L1251,176 L1257,182 L1252.5,186.5 Z" fill="#f9d07a" />
<text x="1269" y="179.9" font-family="Liberation Sans" font-size="18" fill="#f2f2f2" font-weight="normal" font-style="normal" textLength="93.9" lengthAdjust="spacingAndGlyphs" >Match Layer</text>
<path d="M1434,84.8 L1454,84.8 L1460.2,91 L1460.2,121.8 L1434,121.8 Z" fill="#8ccff8" />
<path d="M1454,84.8 L1454,91 L1460.2,91 Z" fill="#c7e8fc" />
<rect x="1413.7" y="101.2" width="30.1" height="21.5" fill="#5d6472" stroke="#cfcfcf" stroke-width="1.2"/>
<circle cx="1443.5" cy="122.4" r="10.4" fill="#5d6472" fill-opacity="0.6" stroke="#cfcfcf" stroke-width="1.2"/>
<rect x="1411.5" y="120.8" width="4.4" height="4.4" fill="#cfcfcf" />
<text x="1415" y="159.4" font-family="Liberation Sans" font-size="18" fill="#f2f2f2" font-weight="normal" font-style="normal" textLength="43.2" lengthAdjust="spacingAndGlyphs" >Insert</text>
<path d="M1432.25,169 L1439.75,169 L1436,173.5 Z" fill="#d9d9d9"/>
<rect x="1472" y="97.5" width="14" height="11" fill="#5d6472" stroke="#cfcfcf" stroke-width="1.1"/>
<circle cx="1486" cy="108.5" r="4.6" fill="#5d6472" stroke="#cfcfcf" stroke-width="1.1"/>
<rect x="1470.5" y="107.0" width="3" height="3" fill="#cfcfcf" />
<path d="M1488.5,89 L1490,94 L1494.5,92 L1491.5,96 L1494.5,100 L1490,98.5 L1488.5,103 L1487,98.5 L1482.5,100 L1485.5,96 L1482.5,92 L1487,94 Z" fill="#f9d07a" />
<text x="1502.4" y="108.2" font-family="Liberation Sans" font-size="18" fill="#f2f2f2" font-weight="normal" font-style="normal" textLength="49.3" lengthAdjust="spacingAndGlyphs" >Create</text>
<rect x="1472" y="132.5" width="14" height="11" fill="#5d6472" stroke="#cfcfcf" stroke-width="1.1"/>
<circle cx="1486" cy="143.5" r="4.6" fill="#5d6472" stroke="#cfcfcf" stroke-width="1.1"/>
<rect x="1470.5" y="142.0" width="3" height="3" fill="#cfcfcf" />
<path d="M1483,140 L1491.5,129.5 L1494,131.5 L1485.5,142 L1482,143 Z" fill="#f9d07a" />
<path d="M1491.5,129.5 L1493,127.7 L1495.5,129.7 L1494,131.5 Z" fill="#e85a5a" />
<text x="1502.4" y="144.0" font-family="Liberation Sans" font-size="18" fill="#f2f2f2" font-weight="normal" font-style="normal" textLength="29.6" lengthAdjust="spacingAndGlyphs" >Edit</text>
<path d="M1471,165 L1477,163 L1493,178 L1483,185 L1471,172 Z" fill="#d4d4d4" />
<circle cx="1476" cy="167" r="1.2" fill="#3b4453"/>
<path d="M1483,176 L1491.5,165.5 L1494,167.5 L1485.5,178 L1482,179 Z" fill="#f9d07a" />
<path d="M1491.5,165.5 L1493,163.7 L1495.5,165.7 L1494,167.5 Z" fill="#e85a5a" />
<text x="1502.4" y="179.9" font-family="Liberation Sans" font-size="18" fill="#f2f2f2" font-weight="normal" font-style="normal" textLength="111.9" lengthAdjust="spacingAndGlyphs" >Edit Attributes</text>
<path d="M1626.6,169.7 L1634.4,169.7 L1630.5,174.5 Z" fill="#d9d9d9"/>
<rect x="1671.8" y="88.9" width="30.2" height="42" fill="#d4d4d4" />
<rect x="1675.5" y="92.3" width="20.3" height="15.1" fill="#8ccff8" />
<rect x="1677" y="93.8" width="17.3" height="12.1" fill="#7cc5f5" />
<line x1="1677" y1="115.5" x2="1695" y2="115.5" stroke="#666" stroke-width="1" />
<line x1="1677" y1="123" x2="1691" y2="123" stroke="#666" stroke-width="1" />
<rect x="1680.5" y="113.5" width="1.4" height="4" fill="#666" />
<rect x="1690" y="121" width="1.4" height="4" fill="#666" />
<path d="M1694,124 L1703,115.5 L1712,124.5 L1703,133 Z" fill="#f9d07a" />
<path d="M1703,115.5 L1710,108.5 L1716,113 L1718.4,115.9 L1712,124.5 Z" fill="#efefef" />
<text x="1670.8" y="162.2" font-family="Liberation Sans" font-size="18" fill="#f2f2f2" font-weight="normal" font-style="normal" textLength="47.6" lengthAdjust="spacingAndGlyphs" >Match</text>
<text x="1654.7" y="186.5" font-family="Liberation Sans" font-size="18" fill="#f2f2f2" font-weight="normal" font-style="normal" textLength="78.7" lengthAdjust="spacingAndGlyphs" >Properties</text>
<path d="M1753.9,101 L1753.90,89.10 A11.9,11.9 0 0 1 1763.65,94.17 Z" fill="#fbbd3a"/>
<path d="M1753.9,101 L1763.65,94.17 A11.9,11.9 0 0 1 1765.75,102.04 Z" fill="#f98e3a"/>
<path d="M1753.9,101 L1765.75,102.04 A11.9,11.9 0 0 1 1760.73,110.75 Z" fill="#e3575a"/>
<path d="M1753.9,101 L1760.73,110.75 A11.9,11.9 0 0 1 1747.07,110.75 Z" fill="#8a5cf0"/>
<path d="M1753.9,101 L1747.07,110.75 A11.9,11.9 0 0 1 1742.00,101.00 Z" fill="#1ab2d5"/>
<path d="M1753.9,101 L1742.00,101.00 A11.9,11.9 0 0 1 1753.90,89.10 Z" fill="#54c471"/>
<rect x="1742" y="125" width="23.9" height="1.1" fill="#d9d9d9" />
<rect x="1742" y="128.8" width="23.9" height="3" fill="#d9d9d9" />
<rect x="1742" y="135.2" width="23.9" height="4.4" fill="#d9d9d9" />
<rect x="1742" y="143" width="23.9" height="5.8" fill="#d9d9d9" />
<line x1="1742" y1="164.4" x2="1765.9" y2="164.4" stroke="#d9d9d9" stroke-width="1.1" stroke-dasharray="2.5 1.8"/>
<line x1="1742" y1="168.4" x2="1765.9" y2="168.4" stroke="#d9d9d9" stroke-width="1.1" stroke-dasharray="5 1.8"/>
<line x1="1742" y1="172.4" x2="1765.9" y2="172.4" stroke="#d9d9d9" stroke-width="1.1" stroke-dasharray="23.9 0"/>
<line x1="1742" y1="176.4" x2="1765.9" y2="176.4" stroke="#d9d9d9" stroke-width="1.1" stroke-dasharray="5 1.8"/>
<line x1="1742" y1="180.6" x2="1765.9" y2="180.6" stroke="#d9d9d9" stroke-width="1.1" stroke-dasharray="7 1.8"/>
<rect x="1770.4" y="85.3" width="268" height="31.199999999999996" fill="#4b5567" stroke="#262c35" stroke-width="1.6"/>
<rect x="1770.4" y="123.2" width="268" height="29.4" fill="#4b5567" stroke="#262c35" stroke-width="1.6"/>
<rect x="1770.4" y="159.3" width="268" height="29.9" fill="#4b5567" stroke="#262c35" stroke-width="1.6"/>
<rect x="1779.2" y="89.5" width="23.3" height="23.2" fill="#ff0000" stroke="#d8d8d8" stroke-width="1"/>
<text x="1809.6" y="108.2" font-family="Liberation Sans" font-size="18" fill="#f2f2f2" font-weight="normal" font-style="normal" textLength="61" lengthAdjust="spacingAndGlyphs" >ByLayer</text>
<rect x="1778.8" y="135.9" width="96.2" height="1.9" fill="#f0f0f0" />
<text x="1878.5" y="144.3" font-family="Liberation Sans" font-size="18" fill="#f2f2f2" font-weight="normal" font-style="normal" textLength="59.3" lengthAdjust="spacingAndGlyphs" >ByLayer</text>
<rect x="1778.8" y="171.9" width="96.2" height="1.9" fill="#f0f0f0" />
<text x="1878.5" y="180" font-family="Liberation Sans" font-size="18" fill="#f2f2f2" font-weight="normal" font-style="normal" textLength="59.3" lengthAdjust="spacingAndGlyphs" >ByLayer</text>
<path d="M2023.0,97.8 L2035.0,97.8 L2029,104.1 Z" fill="#d9d9d9"/>
<path d="M2023.0,135.9 L2035.0,135.9 L2029,142.20000000000002 Z" fill="#d9d9d9"/>
<path d="M2023.0,171.4 L2035.0,171.4 L2029,177.70000000000002 Z" fill="#d9d9d9"/>
<path d="M2059.9,96.2 L2054.1,96.2 L2054.1,136 L2059.9,136 M2081.4,114 L2086.6,114 L2086.6,136 L2081.4,136" fill="none" stroke="#f0f0f0" stroke-width="1.3" />
<rect x="2063.6" y="101.5" width="13.7" height="10.6" fill="#476388" stroke="#62bdf6" stroke-width="1.2"/>
<circle cx="2070.4" cy="124.5" r="7.4" fill="#6c7079" stroke="#d0d0d0" stroke-width="1"/>
<path d="M2088.2,88.9 L2090.5,95.5 L2096.7,92.4 L2093.6,98.6 L2100.2,100.9 L2093.6,103.2 L2096.7,109.4 L2090.5,106.3 L2088.2,112.9 L2085.9,106.3 L2079.7,109.4 L2082.8,103.2 L2076.2,100.9 L2082.8,98.6 L2079.7,92.4 L2085.9,95.5 Z" fill="#f9d07a" />
<text x="2052.3" y="161" font-family="Liberation Sans" font-size="18" fill="#f2f2f2" font-weight="normal" font-style="normal" textLength="48.7" lengthAdjust="spacingAndGlyphs" >Group</text>
<rect x="2116.6" y="92.8" width="8" height="6.6" fill="#476388" stroke="#62bdf6" stroke-width="1"/><circle cx="2120.4" cy="105.4" r="4.1" fill="#6c7079" stroke="#d0d0d0" stroke-width="0.9"/>
<path d="M2128.3,89.5 L2131.9,89.5 L2131.9,112.4 L2128.3,112.4" fill="none" stroke="#f0f0f0" stroke-width="1.1" />
<rect x="2128.5" y="99" width="7" height="6" fill="#3b4453" />
<path d="M2129,99 L2135,105 M2135,99 L2129,105" fill="none" stroke="#ef5050" stroke-width="1.8" />
<path d="M2115.8,125.5 L2113.3,125.5 L2113.3,145.5 L2115.8,145.5 M2125,125.5 L2127.4,125.5 L2127.4,136.5" fill="none" stroke="#f0f0f0" stroke-width="1.1" />
<rect x="2117.5" y="128.6" width="6.1" height="4.9" fill="#476388" stroke="#62bdf6" stroke-width="1"/><circle cx="2120.4" cy="139.5" r="3.2" fill="#6c7079" stroke="#d0d0d0" stroke-width="0.9"/>
<path d="M2125.3,148.6 L2126.5,144 L2134.5,136.5 L2137.5,139.5 L2129.5,147 Z" fill="#f9d07a" />
<path d="M2134.5,136.5 L2135.8,135.2 Q2137.5,134.5 2138.6,136 Q2139.2,137.5 2138.8,138.2 L2137.5,139.5 Z" fill="#ef5050" />
<rect x="2107.2" y="156.1" width="34" height="31.2" fill="#3e5068" stroke="#5fb2ea" stroke-width="1.4"/>
<path d="M2117.5,161.4 L2115.4,161.4 L2115.4,181.4 L2117.5,181.4 M2127.5,161.4 L2129.5,161.4 L2129.5,170" fill="none" stroke="#f0f0f0" stroke-width="1.1" />
<rect x="2119.2" y="164.8" width="6.5" height="4.6" fill="none" stroke="#5cc46a" stroke-width="1.1"/><circle cx="2122.5" cy="175.3" r="3.3" fill="none" stroke="#5cc46a" stroke-width="1.1"/>
<path d="M2128,172.1 L2128,184.5 L2131,181.6 L2133.5,186.5 L2135.3,185.6 L2132.8,180.7 L2136.8,180.4 Z" fill="#f2f2f2" />
<rect x="2179.5" y="106" width="43" height="11" fill="#f9d07a" />
<rect x="2182.0" y="106" width="1" height="4" fill="#3b4453" />
<rect x="2185.8" y="106" width="1" height="2.5" fill="#3b4453" />
<rect x="2189.6" y="106" width="1" height="4" fill="#3b4453" />
<rect x="2193.4" y="106" width="1" height="2.5" fill="#3b4453" />
<rect x="2197.2" y="106" width="1" height="4" fill="#3b4453" />
<rect x="2201.0" y="106" width="1" height="2.5" fill="#3b4453" />
<rect x="2204.8" y="106" width="1" height="4" fill="#3b4453" />
<rect x="2208.6" y="106" width="1" height="2.5" fill="#3b4453" />
<rect x="2212.4" y="106" width="1" height="4" fill="#3b4453" />
<rect x="2216.2" y="106" width="1" height="2.5" fill="#3b4453" />
<rect x="2220.0" y="106" width="1" height="4" fill="#3b4453" />
<text x="2168" y="161" font-family="Liberation Sans" font-size="18" fill="#f2f2f2" font-weight="normal" font-style="normal" textLength="66" lengthAdjust="spacingAndGlyphs" >Measure</text>
<path d="M2196.6,170.7 L2204.7999999999997,170.7 L2200.7,175.6 Z" fill="#d9d9d9"/>
<path d="M2258.4,99 L2258.4,113 L2262,109.5 L2265,115 L2267.5,114 L2264.5,108.5 L2269,108 Z" fill="#f2f2f2" />
<path d="M2268,89 L2264,97 L2268,96.5 L2265,103 L2272,94.5 L2268.5,95 L2271,89 Z" fill="#f9d07a" />
<rect x="2269" y="101" width="14.5" height="12" fill="#f2f2f2" />
<line x1="2273" y1="104.5" x2="2281" y2="104.5" stroke="#3d8fe0" stroke-width="1.2" />
<line x1="2273" y1="107.5" x2="2281" y2="107.5" stroke="#3d8fe0" stroke-width="1.2" />
<line x1="2273" y1="110.5" x2="2281" y2="110.5" stroke="#3d8fe0" stroke-width="1.2" />
<rect x="2259" y="125.5" width="22" height="21.5" fill="none" stroke="#5cc46a" stroke-width="1.2" stroke-dasharray="2 1.2"/>
<rect x="2262.5" y="132" width="13" height="12" fill="#5cc46a" />
<rect x="2266" y="128.5" width="13" height="12" fill="#8fe09a" />
<path d="M2273,136 L2273,150 L2276.5,146.5 L2279.5,152.5 L2281.5,151.5 L2278.5,145.5 L2283,145 Z" fill="#f2f2f2" />
<rect x="2262" y="160.6" width="17.5" height="24.4" fill="#d4d4d4" />
<rect x="2264.5" y="163" width="12.5" height="5" fill="#3b4453" />
<rect x="2264.5" y="171" width="3.3" height="3" fill="#3b4453" />
<rect x="2269" y="171" width="3.3" height="3" fill="#3b4453" />
<rect x="2273.5" y="171" width="3.3" height="3" fill="#3b4453" />
<rect x="2264.5" y="175.5" width="3.3" height="3" fill="#3b4453" />
<rect x="2269" y="175.5" width="3.3" height="3" fill="#3b4453" />
<rect x="2273.5" y="175.5" width="3.3" height="3" fill="#3b4453" />
<rect x="2264.5" y="180" width="3.3" height="3" fill="#3b4453" />
<rect x="2269" y="180" width="3.3" height="3" fill="#3b4453" />
<rect x="2273.5" y="180" width="3.3" height="3" fill="#3b4453" />
<rect x="2314.9" y="92.9" width="33.1" height="36.9" fill="#dcae78" />
<rect x="2325.9" y="103" width="27.3" height="32.7" fill="#3b4453" />
<path d="M2322.7,93.9 L2324,91 L2328,91 Q2328.5,87.7 2331,87.7 Q2333.5,87.7 2334,91 L2338,91 L2339.3,93.9 Z" fill="#f2f2f2" />
<path d="M2326.9,103 L2344.5,103 L2353.2,111.7 L2353.2,135.7 L2326.9,135.7 Z" fill="#dcdcdc" />
<path d="M2344.5,103 L2353.2,111.7 L2344.5,111.7 Z" fill="#f5f5f5" />
<text x="2313.4" y="161" font-family="Liberation Sans" font-size="18" fill="#f2f2f2" font-weight="normal" font-style="normal" textLength="40.3" lengthAdjust="spacingAndGlyphs" >Paste</text>
<path d="M2328.65,170.8 L2335.9500000000003,170.8 L2332.3,175.3 Z" fill="#d9d9d9"/>
<rect x="2378.9" y="89.1" width="18.2" height="20.9" fill="#d4d4d4" />
<line x1="2381.5" y1="93.4" x2="2394" y2="93.4" stroke="#8a8a8a" stroke-width="1" />
<line x1="2381.5" y1="99.3" x2="2391" y2="99.3" stroke="#8a8a8a" stroke-width="1" />
<line x1="2381.5" y1="105.2" x2="2391" y2="105.2" stroke="#8a8a8a" stroke-width="1" />
<path d="M2389.6,96.6 L2398.5,108 M2402.5,98.7 L2394.5,108" fill="none" stroke="#f5f5f5" stroke-width="1.4" />
<circle cx="2392.8" cy="110.5" r="2.5" fill="#3b4453" stroke="#f5f5f5" stroke-width="1.4"/><circle cx="2399.8" cy="110.5" r="2.5" fill="#3b4453" stroke="#f5f5f5" stroke-width="1.4"/>
<path d="M2409.6,98 L2417.6,98 L2413.6,103 Z" fill="#d9d9d9"/>
<path d="M2382.1,125 L2389.5,125 L2391.2,126.8 L2391.2,144.8 L2382.1,144.8 Z" fill="#d4d4d4" stroke="#3b4453" stroke-width="1"/>
<path d="M2385.9,128.7 L2396.5,128.7 L2400.9,133.1 L2400.9,149.1 L2385.9,149.1 Z" fill="#dcdcdc" stroke="#3b4453" stroke-width="1"/>
<path d="M2409.6,134 L2417.6,134 L2413.6,139 Z" fill="#d9d9d9"/>
<path d="M2452.8,92.9 L2474,92.9 L2474,108.1 L2501,108.1 L2501,129.1 L2452.8,129.1 Z" fill="#dcdcdc" />
<text x="2460" y="160.2" font-family="Liberation Sans" font-size="18" fill="#f2f2f2" font-weight="normal" font-style="normal" textLength="34.7" lengthAdjust="spacingAndGlyphs" >Base</text>
<path d="M2473.0499999999997,170.3 L2480.35,170.3 L2476.7,174.9 Z" fill="#d9d9d9"/>
<path d="M104,229 L247,229 L232.2,266 L88.6,266 Z" fill="#3b4453" />
<line x1="29" y1="235" x2="18" y2="259" stroke="#4f5866" stroke-width="1.3" />
<text x="42.5" y="254" font-family="Liberation Sans" font-size="18" fill="#f2f2f2" font-weight="normal" font-style="normal" textLength="35.5" lengthAdjust="spacingAndGlyphs" >Start</text>
<text x="114.7" y="254" font-family="Liberation Sans" font-size="18" fill="#ffffff" font-weight="bold" font-style="normal" textLength="88.3" lengthAdjust="spacingAndGlyphs" >Drawing2*</text>
<path d="M217.5,242 L228.5,253 M228.5,242 L217.5,253" fill="none" stroke="#aeb2b8" stroke-width="2.2" />
<rect x="259" y="245.8" width="18" height="2.6" fill="#e0e0e0" />
<rect x="266.7" y="238" width="2.6" height="18" fill="#e0e0e0" />
<line x1="304" y1="235" x2="293" y2="259" stroke="#4f5866" stroke-width="1.3" />
<rect x="4" y="265" width="2548" height="6" fill="#3b4453" />
<rect x="4" y="265" width="38" height="9" fill="#3b4453" />
<rect x="5" y="278" width="33" height="1189" fill="#3b4453" />
<text x="0" y="0" font-family="Liberation Sans" font-size="17" fill="#e8e8e8" textLength="201" lengthAdjust="spacingAndGlyphs" transform="translate(28.3,972) rotate(-90)">Layer Properties Manager</text>
<text x="45.9" y="296.2" font-family="Liberation Sans" font-size="18" fill="#f0f0f0" font-weight="normal" font-style="normal" textLength="4.4" lengthAdjust="spacingAndGlyphs" >[</text>
<rect x="51.9" y="287.2" width="10.3" height="1.9" fill="#f0f0f0" />
<text x="64.9" y="296.2" font-family="Liberation Sans" font-size="18" fill="#f0f0f0" font-weight="normal" font-style="normal" textLength="4.4" lengthAdjust="spacingAndGlyphs" >]</text>
<text x="71.6" y="296.2" font-family="Liberation Sans" font-size="18" fill="#f0f0f0" font-weight="normal" font-style="normal" textLength="234.6" lengthAdjust="spacingAndGlyphs" >[Custom View][2D Wireframe]</text>
<rect x="2463.3" y="292.3" width="16.5" height="6.4" fill="#e8e8e8" stroke="#14171c" stroke-width="1"/>
<rect x="2496.5" y="282.8" width="13.2" height="13" fill="none" stroke="#14171c" stroke-width="1"/>
<rect x="2496.8" y="283.2" width="12.6" height="2.4" fill="#f0f0f0" />
<rect x="2506.6" y="283.2" width="2.6" height="12.3" fill="#f0f0f0" />
<rect x="2495.4" y="288.4" width="9.3" height="9" fill="none" stroke="#f0f0f0" stroke-width="3.4"/>
<rect x="2493.2" y="286.2" width="13.7" height="13.4" fill="none" stroke="#14171c" stroke-width="0.9"/>
<path d="M2524.5,285 L2537.5,298.2 M2537.5,285 L2524.5,298.2" fill="none" stroke="#14171c" stroke-width="5.4" />
<path d="M2524.5,285 L2537.5,298.2 M2537.5,285 L2524.5,298.2" fill="none" stroke="#f0f0f0" stroke-width="3.4" />
<line x1="1640.4" y1="383.8" x2="2015.1" y2="590.8" stroke="#e0ac00" stroke-width="1.45" />
<line x1="1640.4" y1="383.8" x2="1394.6" y2="699.7" stroke="#e0ac00" stroke-width="1.45" />
<line x1="2015.1" y1="590.8" x2="1769.4" y2="906.8" stroke="#e0ac00" stroke-width="1.45" />
<line x1="1394.6" y1="699.7" x2="1769.4" y2="906.8" stroke="#e0ac00" stroke-width="1.45" />
<line x1="1640.4" y1="624.2" x2="2015.1" y2="831.2" stroke="#e0ac00" stroke-width="1.45" />
<line x1="1640.4" y1="624.2" x2="1394.6" y2="940.1" stroke="#e0ac00" stroke-width="1.45" />
<line x1="2015.1" y1="831.2" x2="1769.4" y2="1147.2" stroke="#e0ac00" stroke-width="1.45" />
<line x1="1394.6" y1="940.1" x2="1769.4" y2="1147.2" stroke="#e0ac00" stroke-width="1.45" />
<line x1="1640.4" y1="383.8" x2="1640.4" y2="624.2" stroke="#e0ac00" stroke-width="1.45" />
<line x1="2015.1" y1="590.8" x2="2015.1" y2="831.2" stroke="#e0ac00" stroke-width="1.45" />
<line x1="1394.6" y1="699.7" x2="1394.6" y2="940.1" stroke="#e0ac00" stroke-width="1.45" />
<line x1="1769.4" y1="906.8" x2="1769.4" y2="1147.2" stroke="#e0ac00" stroke-width="1.45" />
<line x1="1394.7" y1="939.7" x2="1394.7" y2="899.8" stroke="#f4ecd8" stroke-width="1.3" />
<line x1="1394.7" y1="939.7" x2="1436" y2="886.6" stroke="#f4ecd8" stroke-width="1.3" />
<line x1="1394.7" y1="939.7" x2="1457" y2="974.8" stroke="#f4ecd8" stroke-width="1.3" />
<path d="M1385.9,941.3 L1394.3,933 L1404.2,938.7 L1397.2,947.8 Z" fill="none" stroke="#f2f2f2" stroke-width="1.3" />
<path d="M1400.2,879.3 L1418,879.3 L1400.2,898.5 L1418.2,898.5" fill="none" stroke="#b8bcc2" stroke-width="1.3" />
<path d="M1437.6,863.7 L1446.8,872.3 L1456,864.3 M1446.8,872.3 L1446.8,881.8" fill="none" stroke="#b8bcc2" stroke-width="1.3" />
<path d="M1461.9,954.8 L1480.2,973.2 M1480.2,954.8 L1461.9,973.2" fill="none" stroke="#d0d4d8" stroke-width="1.3" />
<line x1="2221.5" y1="1038" x2="2221.5" y2="1114.5" stroke="#7b7ff0" stroke-width="1.2" />
<line x1="2273.7" y1="1022" x2="2195.2" y2="1122.5" stroke="#5ee06a" stroke-width="1.2" />
<line x1="2181.2" y1="1067" x2="2301.8" y2="1133.6" stroke="#e87777" stroke-width="1.2" />
<rect x="2217.5" y="1085.2" width="8" height="8" fill="#212830" stroke="#e8e8e8" stroke-width="1.1"/>
<defs><radialGradient id="sh" cx="0.5" cy="0.5" r="0.5"><stop offset="0" stop-color="#5b6068" stop-opacity="0.9"/><stop offset="1" stop-color="#212830" stop-opacity="0"/></radialGradient><linearGradient id="fr" x1="0" y1="0" x2="0" y2="1"><stop offset="0" stop-color="#dfe0e2"/><stop offset="1" stop-color="#b9bbbe"/></linearGradient><linearGradient id="rt" x1="0" y1="0" x2="0" y2="1"><stop offset="0" stop-color="#d6d7d9"/><stop offset="1" stop-color="#a9abae"/></linearGradient></defs>
<path fill-rule="evenodd" fill="#646970" d="M2521.4,457.5 A93.3,80.5 0 1 1 2334.8,457.5 A93.3,80.5 0 1 1 2521.4,457.5 Z M2500.9,456.5 A72.5,60.1 0 1 0 2355.9,456.5 A72.5,60.1 0 1 0 2500.9,456.5 Z"/>
<text x="0" y="0" text-anchor="middle" font-family="Liberation Sans" font-size="31" font-weight="bold" fill="#cdcfd2" transform="translate(2360.8,409.7) rotate(-32) translate(0,11.2)">W</text>
<text x="0" y="0" text-anchor="middle" font-family="Liberation Sans" font-size="25" font-weight="bold" fill="#cdcfd2" transform="translate(2473.7,390.3) rotate(28) translate(0,9.0)">N</text>
<text x="0" y="0" text-anchor="middle" font-family="Liberation Sans" font-size="30" font-weight="bold" fill="#cdcfd2" transform="translate(2503,494.3) rotate(-32) translate(0,10.8)">E</text>
<text x="0" y="0" text-anchor="middle" font-family="Liberation Sans" font-size="30" font-weight="bold" fill="#cdcfd2" transform="translate(2376,517) rotate(30) translate(0,10.8)">S</text>
<ellipse cx="2430" cy="470" rx="52" ry="36" fill="url(#sh)"/>
<path d="M2417.9,366.8 L2478.5,398 L2439.7,452.2 L2375,417.4 Z" fill="#dcdddf" stroke="#8e9196" stroke-width="0.6" stroke-dasharray="1.5 1"/>
<path d="M2375,417.4 L2439.7,452.2 L2438.1,488.6 L2380.2,455.5 Z" fill="url(#fr)" stroke="#8e9196" stroke-width="0.6" stroke-dasharray="1.5 1"/>
<path d="M2439.7,452.2 L2478.5,398 L2475.3,433.6 L2438.1,488.6 Z" fill="url(#rt)" stroke="#8e9196" stroke-width="0.6" stroke-dasharray="1.5 1"/>
<path d="M2429,438 L2437,437 L2446,446 L2439.7,452.2 L2428,447 Z" fill="#c3c8d2"/>
<text x="0" y="0" font-family="Liberation Sans" font-size="17" font-weight="bold" fill="#5d6168" textLength="34" lengthAdjust="spacingAndGlyphs" transform="translate(2411,404) rotate(27) skewX(-12)">TOP</text>
<text x="0" y="0" font-family="Liberation Sans" font-size="12" font-weight="bold" fill="#5d6168" textLength="43" lengthAdjust="spacingAndGlyphs" transform="translate(2386,447) rotate(27) skewX(-10)">FRONT</text>
<text x="0" y="0" font-family="Liberation Sans" font-size="10" font-weight="bold" fill="#6d7178" textLength="29" lengthAdjust="spacingAndGlyphs" transform="translate(2452,461) rotate(-58) skewX(-20)">RIGHT</text>
<rect x="2394" y="559" width="68.7" height="24.8" rx="4" fill="#c5c7d6" stroke="#9ea1b0" stroke-width="0.8"/>
<text x="2400.6" y="575.5" font-family="Liberation Sans" font-size="16" fill="#6a6d78" font-weight="normal" font-style="normal" textLength="34.6" lengthAdjust="spacingAndGlyphs" >WCS</text>
<path d="M2444,567.5 L2456,567.5 L2450,573.9 Z" fill="none" stroke="#8f92a0" stroke-width="1" />
<rect x="2501.8" y="617.8" width="46.4" height="311.1" rx="3" fill="#85888d" stroke="#6c6f74" stroke-width="0.8"/>
<circle cx="2538.7" cy="625.3" r="5" fill="none" stroke="#696c71" stroke-width="1.2"/>
<path d="M2536,622.6 L2541.4,628 M2541.4,622.6 L2536,628" fill="none" stroke="#696c71" stroke-width="1.1" />
<path d="M2541,642.5 L2541,659 A16.5,16.5 0 1 1 2524.5,642.5 Z" fill="none" stroke="#696c71" stroke-width="1.4" />
<circle cx="2524.5" cy="659" r="8" fill="none" stroke="#696c71" stroke-width="1.4"/>
<line x1="2518" y1="664" x2="2512" y2="670" stroke="#696c71" stroke-width="1.3" />
<line x1="2531" y1="664" x2="2537" y2="670" stroke="#696c71" stroke-width="1.3" />
<path d="M2521.7999999999997,686.7 L2529.6,686.7 L2525.7,691.8000000000001 Z" fill="#696c71"/>
<path d="M2511,726 Q2514,721 2518,727 L2517,709 Q2519,705 2521,709 L2522,720 L2523,707 Q2526,703 2528,707 L2528,720 L2530,709 Q2533,706 2534,710 L2533,723 L2537,715 Q2541,713 2540,718 L2534,735 Q2531,740 2524,740 L2519,740 Q2513,736 2511,726 Z" fill="none" stroke="#696c71" stroke-width="1.4" />
<path d="M2508,749 L2530,771 M2530,749 L2508,771 M2508,749 L2514,749 M2508,749 L2508,755 M2530,749 L2524,749 M2530,749 L2530,755 M2508,771 L2508,765 M2508,771 L2514,771" fill="none" stroke="#696c71" stroke-width="1.5" />
<circle cx="2532" cy="772" r="6" fill="#85888d" stroke="#696c71" stroke-width="1.6"/>
<line x1="2536.5" y1="776.5" x2="2542" y2="782" stroke="#696c71" stroke-width="2.8" />
<path d="M2521.7999999999997,791.8 L2529.6,791.8 L2525.7,796.6999999999999 Z" fill="#696c71"/>
<path d="M2521,809 L2525,804.4 L2529,809 L2527,809 L2527,836 L2523,836 L2523,809 Z" fill="none" stroke="#696c71" stroke-width="1.3" />
<ellipse cx="2524.5" cy="824" rx="17" ry="6" fill="none" stroke="#696c71" stroke-width="1.4"/>
<path d="M2508,826 L2514,821 L2514,831 Z" fill="#696c71" />
<path d="M2521.7999999999997,848.9 L2529.6,848.9 L2525.7,854.0 Z" fill="#696c71"/>
<rect x="2507.8" y="868.3" width="9.5" height="9.5" fill="none" stroke="#696c71" stroke-width="1.3"/>
<rect x="2519.5" y="868.3" width="9.5" height="9.5" fill="none" stroke="#696c71" stroke-width="1.3"/>
<rect x="2531.2" y="868.3" width="9.5" height="9.5" fill="none" stroke="#696c71" stroke-width="1.3"/>
<rect x="2507.8" y="882" width="24" height="19.6" fill="none" stroke="#696c71" stroke-width="1.4"/>
<path d="M2515,885.5 L2525,891.8 L2515,898 Z" fill="#696c71" />
<circle cx="2538.7" cy="918.8" r="5.2" fill="none" stroke="#696c71" stroke-width="1.2"/>
<line x1="2535.5" y1="917.5" x2="2542" y2="917.5" stroke="#696c71" stroke-width="1.1" />
<line x1="2535.5" y1="920.5" x2="2542" y2="920.5" stroke="#696c71" stroke-width="1.1" />
<rect x="572" y="1287.4" width="36" height="186" fill="#2a303a" />
<rect x="578.0" y="1295" width="1.2" height="1.2" fill="#aab0b8" />
<rect x="581.5" y="1295" width="1.2" height="1.2" fill="#aab0b8" />
<rect x="585.0" y="1295" width="1.2" height="1.2" fill="#aab0b8" />
<rect x="588.5" y="1295" width="1.2" height="1.2" fill="#aab0b8" />
<rect x="592.0" y="1295" width="1.2" height="1.2" fill="#aab0b8" />
<rect x="595.5" y="1295" width="1.2" height="1.2" fill="#aab0b8" />
<rect x="599.0" y="1295" width="1.2" height="1.2" fill="#aab0b8" />
<rect x="602.5" y="1295" width="1.2" height="1.2" fill="#aab0b8" />
<path d="M583.5,1316 L596.5,1328.8 M596.5,1316 L583.5,1328.8" fill="none" stroke="#c8ccd2" stroke-width="2.6" />
<path d="M580.5,1367.5 L592,1356" fill="none" stroke="#b8bcc2" stroke-width="2.6" />
<path d="M590,1354 A6.5,6.5 0 0 1 598.5,1346.5 L595.5,1350 L596.5,1353 L599.5,1354 L602.5,1351 A6.5,6.5 0 0 1 594,1359 Z" fill="#b8bcc2" />
<rect x="609.3" y="1288.2" width="1409" height="155" fill="#999a9c" rx="1"/>
<text x="613.6" y="1320.0" font-family="Liberation Mono" font-size="19" fill="#111111" font-weight="normal" font-style="normal" textLength="88.0" lengthAdjust="spacingAndGlyphs" >Command:</text>
<text x="613.6" y="1342.95" font-family="Liberation Mono" font-size="19" fill="#111111" font-weight="normal" font-style="normal" textLength="88.0" lengthAdjust="spacingAndGlyphs" >Command:</text>
<text x="613.6" y="1365.9" font-family="Liberation Mono" font-size="19" fill="#111111" font-weight="normal" font-style="normal" textLength="88.0" lengthAdjust="spacingAndGlyphs" >Command:</text>
<text x="613.6" y="1388.85" font-family="Liberation Mono" font-size="19" fill="#111111" font-weight="normal" font-style="normal" textLength="682.0" lengthAdjust="spacingAndGlyphs" >Command: Specify opposite corner or [Fence/WPolygon/CPolygon]:</text>
<text x="613.6" y="1411.8" font-family="Liberation Mono" font-size="19" fill="#111111" font-weight="normal" font-style="normal" textLength="187.0" lengthAdjust="spacingAndGlyphs" >Command: *Cancel*</text>
<text x="613.6" y="1434.75" font-family="Liberation Mono" font-size="19" fill="#111111" font-weight="normal" font-style="normal" textLength="319.0" lengthAdjust="spacingAndGlyphs"  style="white-space:pre">Command:  Regenerating model.</text>
<rect x="609.3" y="1442.5" width="1409" height="1.5" fill="#2b2b2b" />
<rect x="609.3" y="1444" width="1409" height="29.4" fill="#c0c1c3" />
<rect x="616.5" y="1451" width="23.5" height="17" fill="none" stroke="#555" stroke-width="1.2"/>
<rect x="616.5" y="1451" width="23.5" height="4.3" fill="#555" />
<rect x="618" y="1452.2" width="1.8" height="1.8" fill="#c0c1c3" />
<path d="M620,1459 L623.5,1461.5 L620,1464 M624.5,1465 L628,1465" fill="none" stroke="#555" stroke-width="1" />
<path d="M643.6,1454 L654.4,1454 L649,1459.5 Z" fill="#555"/>
<text x="664.5" y="1466.3" font-family="Liberation Mono" font-size="19" fill="#77797e" font-weight="normal" font-style="italic" textLength="153.5" lengthAdjust="spacingAndGlyphs" >Type a command</text>
<path d="M2002.4,1462 L2014,1462 L2008.2,1455.6 Z" fill="#555" />
<rect x="4" y="1471" width="38" height="9" fill="#3b4453" />
<rect x="4" y="1474" width="2548" height="5.8" fill="#3b4453" />
<path d="M32.3,1479 L122.2,1479 L107,1515.7 L17.4,1515.7 Z" fill="#3b4453" />
<text x="42.5" y="1506" font-family="Liberation Sans" font-size="18" fill="#ffffff" font-weight="bold" font-style="normal" textLength="53.5" lengthAdjust="spacingAndGlyphs" >Model</text>
<text x="133" y="1506" font-family="Liberation Sans" font-size="18" fill="#f2f2f2" font-weight="normal" font-style="normal" textLength="18.5" lengthAdjust="spacingAndGlyphs" >a3</text>
<line x1="176" y1="1486" x2="165" y2="1510" stroke="#4f5866" stroke-width="1.3" />
<rect x="191" y="1496.7" width="18" height="2.6" fill="#e0e0e0" />
<rect x="198.7" y="1489" width="2.6" height="18" fill="#e0e0e0" />
<line x1="236" y1="1486" x2="225" y2="1510" stroke="#4f5866" stroke-width="1.3" />
<rect x="1684.2" y="1484.2" width="71.8" height="35.5" fill="#3b4453" />
<rect x="1762" y="1484.2" width="95.8" height="35.5" fill="#3b4453" />
<rect x="1864" y="1484.2" width="35.8" height="35.5" fill="#3b4453" />
<rect x="1902" y="1484.2" width="155.6" height="35.5" fill="#3b4453" />
<rect x="2060.7" y="1484.2" width="95.0" height="35.5" fill="#3b4453" />
<rect x="2162.8" y="1484.2" width="157.2" height="35.5" fill="#3b4453" />
<rect x="2326" y="1484.2" width="60" height="35.5" fill="#3b4453" />
<rect x="2388" y="1484.2" width="36" height="35.5" fill="#3b4453" />
<rect x="2430" y="1484.2" width="36" height="35.5" fill="#3b4453" />
<rect x="2470" y="1484.2" width="3.8" height="35.5" fill="#3b4453" />
<rect x="2478" y="1484.2" width="72" height="35.5" fill="#3b4453" />
<rect x="2060.7" y="1484.2" width="34.1" height="35.5" fill="#5b8cc6" />
<rect x="2097" y="1484.2" width="34" height="35.5" fill="#5b8cc6" />
<rect x="2162.8" y="1484.2" width="34.2" height="35.5" fill="#5b8cc6" />
<text x="1689.7" y="1510" font-family="Liberation Sans" font-size="18" fill="#f2f2f2" font-weight="normal" font-style="normal" textLength="61.5" lengthAdjust="spacingAndGlyphs" >MODEL</text>
<line x1="1773.5" y1="1490" x2="1773.5" y2="1513" stroke="#e0e0e0" stroke-width="1.1" />
<line x1="1768" y1="1495.5" x2="1791" y2="1495.5" stroke="#e0e0e0" stroke-width="1.1" />
<line x1="1779.45" y1="1490" x2="1779.45" y2="1513" stroke="#e0e0e0" stroke-width="1.1" />
<line x1="1768" y1="1501.5" x2="1791" y2="1501.5" stroke="#e0e0e0" stroke-width="1.1" />
<line x1="1785.4" y1="1490" x2="1785.4" y2="1513" stroke="#e0e0e0" stroke-width="1.1" />
<line x1="1768" y1="1507.5" x2="1791" y2="1507.5" stroke="#e0e0e0" stroke-width="1.1" />
<rect x="1806.8" y="1492.7" width="3.4" height="3.4" fill="#e0e0e0" />
<rect x="1806.8" y="1499.7" width="3.4" height="3.4" fill="#e0e0e0" />
<rect x="1806.8" y="1506.7" width="3.4" height="3.4" fill="#e0e0e0" />
<rect x="1813.8" y="1492.7" width="3.4" height="3.4" fill="#e0e0e0" />
<rect x="1813.8" y="1499.7" width="3.4" height="3.4" fill="#e0e0e0" />
<rect x="1813.8" y="1506.7" width="3.4" height="3.4" fill="#e0e0e0" />
<rect x="1820.8" y="1492.7" width="3.4" height="3.4" fill="#e0e0e0" />
<rect x="1820.8" y="1499.7" width="3.4" height="3.4" fill="#e0e0e0" />
<rect x="1820.8" y="1506.7" width="3.4" height="3.4" fill="#e0e0e0" />
<path d="M1840.0,1499 L1852.0,1499 L1846,1505.3 Z" fill="#d9d9d9"/>
<path d="M1875,1493 L1875,1504 M1869.5,1498.5 L1880.5,1498.5" fill="none" stroke="#e0e0e0" stroke-width="1.2" />
<rect x="1879.5" y="1505.5" width="14" height="5.5" fill="#e0e0e0"/>
<rect x="1881" y="1507" width="1.3" height="2.5" fill="#3b4453" />
<path d="M1908,1490 L1908,1513 L1932,1513 M1908,1507 L1915,1507 L1915,1513" fill="none" stroke="#e0e0e0" stroke-width="1.2" />
<circle cx="1954" cy="1502.5" r="9" fill="none" stroke="#e0e0e0" stroke-width="1.2"/>
<path d="M1953,1501 L1968,1501 M1953,1501 L1963,1492" fill="none" stroke="#e0e0e0" stroke-width="1.2" />
<path d="M1980.0,1499.3 L1992.0,1499.3 L1986,1505.3 Z" fill="#d9d9d9"/>
<line x1="2016" y1="1490" x2="2016" y2="1513" stroke="#5ee06a" stroke-width="1.2" />
<line x1="2007" y1="1492" x2="2024" y2="1511" stroke="#e87777" stroke-width="1.2" />
<rect x="2013.5" y="1498.5" width="5" height="5" fill="#3b4453" stroke="#e8e8e8" stroke-width="1"/>
<path d="M2039.7,1499.3 L2051.7,1499.3 L2045.7,1505.3 Z" fill="#d9d9d9"/>
<path d="M2066,1510.5 L2090,1510.5 M2066,1510.5 L2084,1493" fill="none" stroke="#f2f2f2" stroke-width="1.3" />
<rect x="2072.7" y="1499.7" width="4.6" height="4.6" fill="#f2f2f2" />
<rect x="2105.9" y="1493.9" width="19.3" height="19.1" fill="none" stroke="#f2f2f2" stroke-width="1.2"/>
<rect x="2102.6" y="1490.9" width="5.6" height="5.6" fill="#5b8cc6" stroke="#f2f2f2" stroke-width="1.1"/>
<path d="M2138.2,1500 L2150.2,1500 L2144.2,1506 Z" fill="#d9d9d9"/>
<path d="M2178.6,1490 L2182.5,1501.5 L2189.2999999999997,1513.8 L2178.6,1507 L2167.9,1513.8 L2174.7,1501.5 Z" fill="#f2f2f2" />
<circle cx="2187.3" cy="1495.6" r="4" fill="none" stroke="#f2f2f2" stroke-width="1.1"/>
<path d="M2214.6,1490 L2218.5,1501.5 L2225.2999999999997,1513.8 L2214.6,1507 L2203.9,1513.8 L2210.7,1501.5 Z" fill="#d8d8d8" />
<path d="M2224,1490.7 L2227,1490.7 L2224.5,1495 L2227,1495 L2220,1501.4 L2222,1496.5 L2220,1496.5 Z" fill="#d8d8d8" />
<path d="M2251.3,1490 L2255.2000000000003,1501.5 L2262.0,1513.8 L2251.3,1507 L2240.6000000000004,1513.8 L2247.4,1501.5 Z" fill="#d8d8d8" />
<rect x="2280.7" y="1496" width="3.4" height="12.9" fill="#f2f2f2" />
<path d="M2280.7,1496 L2281.2999999999997,1498.6 L2278.1,1500.6 L2277.5,1499 Z" fill="#f2f2f2" />
<rect x="2291.6" y="1496" width="3.4" height="12.9" fill="#f2f2f2" />
<path d="M2291.6,1496 L2292.2,1498.6 L2289.0,1500.6 L2288.4,1499 Z" fill="#f2f2f2" />
<rect x="2286.3" y="1500.2" width="2.7" height="2.4" fill="#f2f2f2" />
<rect x="2286.3" y="1506.6" width="2.7" height="2.4" fill="#f2f2f2" />
<path d="M2302.0,1499.3 L2314.0,1499.3 L2308,1505.3 Z" fill="#d9d9d9"/>
<circle cx="2344" cy="1501.5" r="8.5" fill="#d9d9d9"/><circle cx="2344" cy="1501.5" r="3.7" fill="#3b4453"/>
<rect x="2341.5" y="1489.2" width="5" height="5" fill="#d9d9d9" transform="rotate(0 2344 1501.5)"/>
<rect x="2341.5" y="1489.2" width="5" height="5" fill="#d9d9d9" transform="rotate(45 2344 1501.5)"/>
<rect x="2341.5" y="1489.2" width="5" height="5" fill="#d9d9d9" transform="rotate(90 2344 1501.5)"/>
<rect x="2341.5" y="1489.2" width="5" height="5" fill="#d9d9d9" transform="rotate(135 2344 1501.5)"/>
<rect x="2341.5" y="1489.2" width="5" height="5" fill="#d9d9d9" transform="rotate(180 2344 1501.5)"/>
<rect x="2341.5" y="1489.2" width="5" height="5" fill="#d9d9d9" transform="rotate(225 2344 1501.5)"/>
<rect x="2341.5" y="1489.2" width="5" height="5" fill="#d9d9d9" transform="rotate(270 2344 1501.5)"/>
<rect x="2341.5" y="1489.2" width="5" height="5" fill="#d9d9d9" transform="rotate(315 2344 1501.5)"/>
<path d="M2368.3,1499.3 L2380.3,1499.3 L2374.3,1505.3 Z" fill="#d9d9d9"/>
<rect x="2394.5" y="1500.2" width="23" height="2.6" fill="#e0e0e0" />
<rect x="2404.7" y="1490" width="2.6" height="23" fill="#e0e0e0" />
<rect x="2436.5" y="1490.5" width="9" height="9" fill="none" stroke="#e0e0e0" stroke-width="1.2"/><circle cx="2454" cy="1500" r="5" fill="none" stroke="#e0e0e0" stroke-width="1.2"/>
<path d="M2445.2,1505.5 L2450.4,1514 L2440,1514 Z" fill="none" stroke="#e0e0e0" stroke-width="1.2" />
<rect x="2484.5" y="1493.5" width="23" height="16.5" fill="none" stroke="#e0e0e0" stroke-width="1.2"/>
<path d="M2488,1507 L2494,1501 M2488,1507 L2488,1503.5 M2488,1507 L2491.5,1507 M2504,1496.5 L2498,1502.5 M2504,1496.5 L2500.5,1496.5 M2504,1496.5 L2504,1500" fill="none" stroke="#e0e0e0" stroke-width="1.1" />
<rect x="2520" y="1492" width="24" height="3" fill="#e0e0e0" />
<rect x="2520" y="1500.5" width="24" height="3" fill="#e0e0e0" />
<rect x="2520" y="1509" width="24" height="3" fill="#e0e0e0" />
</svg>
<div class="r" style="left:0;top:1526.5px;width:2556px;height:1.5px;background:#1a9be3"></div>
<div class="r" style="left:2554.5px;top:0;width:1.5px;height:1528px;background:#1a9be3"></div>
<div class="r" style="left:0;top:0;width:1.4px;height:1528px;background:#1a9be3"></div>
</body></html>
